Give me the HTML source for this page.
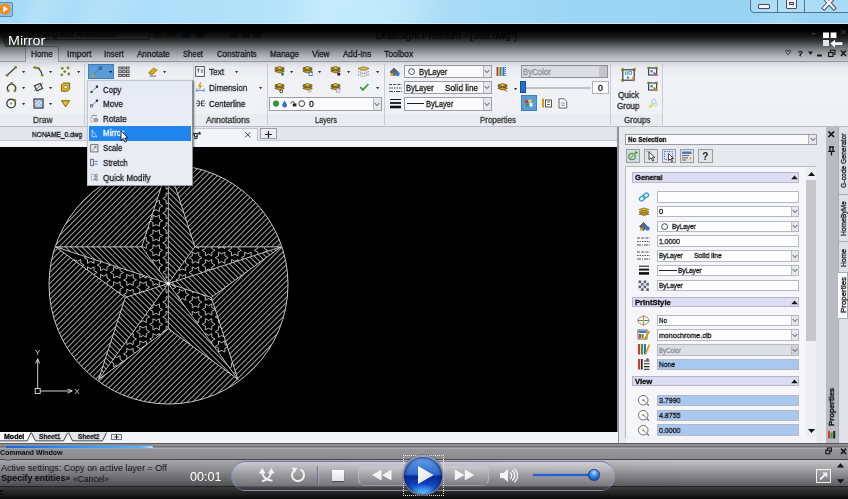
<!DOCTYPE html>
<html><head><meta charset="utf-8"><title>Mirror</title>
<style>
html,body{margin:0;padding:0;background:#000;}
#root{position:relative;width:848px;height:499px;overflow:hidden;background:#ececf1;font-family:"Liberation Sans",sans-serif;font-size:8.5px;color:#222;}
#root div,#root span,#root svg{position:absolute;box-sizing:border-box;white-space:nowrap;}
#root svg{overflow:visible;}
#app{left:0;top:0;width:848px;height:499px;filter:blur(0.4px);}
#wmp{left:0;top:0;width:848px;height:499px;}
#app span{-webkit-text-stroke:0.3px currentColor;}
#root span{will-change:transform;}
</style></head><body>
<div id="root">
<div id="app">
<div style="left:0.0px;top:0.0px;width:848.0px;height:24.0px;background:linear-gradient(90deg,#a6dbf6 0%,#b3e2f9 30%,#c2eafc 44%,#a9dcf6 52%,#9bd5f4 70%,#98d3f3 100%);"></div>
<div style="left:0.0px;top:0.0px;width:848.0px;height:24.0px;background:linear-gradient(115deg,rgba(255,255,255,0) 3%,rgba(255,255,255,.16) 5%,rgba(255,255,255,0) 9%,rgba(255,255,255,.12) 12%,rgba(255,255,255,0) 17%,rgba(255,255,255,0) 34%,rgba(255,255,255,.14) 38%,rgba(255,255,255,0) 44%,rgba(255,255,255,.1) 48%,rgba(255,255,255,0) 53%,rgba(255,255,255,0) 88%,rgba(255,255,255,.12) 92%,rgba(255,255,255,0) 96%);"></div>
<div style="left:0.0px;top:22.5px;width:848.0px;height:1.5px;background:#c9ecfb;"></div>
<div style="left:-2.0px;top:1.5px;width:15.0px;height:15.5px;background:#8fc0ea;border:1.5px solid #4f8fd0;border-radius:2px;"></div>
<svg style="left:-1px;top:3px" width="12" height="12" viewBox="0 0 12 12"><circle cx="6" cy="6" r="5.6" fill="#f68b10"/><path d="M4.2 2.8 L9.2 6 L4.2 9.2Z" fill="#fff"/></svg>
<div style="left:749.5px;top:-6.0px;width:110.0px;height:19.3px;border:1px solid #55748a;border-radius:4px;background:rgba(200,236,252,0.35);"></div>
<div style="left:777.3px;top:0.0px;width:1.0px;height:13.0px;background:#55748a;"></div>
<div style="left:804.0px;top:0.0px;width:1.0px;height:13.0px;background:#55748a;"></div>
<div style="left:758.3px;top:4.0px;width:12.0px;height:4.6px;background:#f4f4f6;border:1px solid #444a60;border-radius:1px;"></div>
<div style="left:785.6px;top:-3.0px;width:11.0px;height:11.6px;background:#f4f4f6;border:1px solid #444a60;border-radius:1px;"></div>
<div style="left:788.5px;top:1.8px;width:5.2px;height:3.2px;background:#a9d9f2;border:1px solid #444a60;"></div>
<svg style="left:822px;top:-3px" width="14" height="13" viewBox="0 0 14 13"><path d="M2.2 0.5 L11.8 11 M11.8 0.5 L2.2 11" stroke="#444a60" stroke-width="4.2" stroke-linecap="square"/><path d="M2.2 0.5 L11.8 11 M11.8 0.5 L2.2 11" stroke="#f4f4f6" stroke-width="2.4" stroke-linecap="square"/></svg>
<div style="left:0.0px;top:24.0px;width:848.0px;height:22.5px;background:#e3e6ee;"></div>
<div style="left:2.0px;top:30.0px;width:22.0px;height:18.0px;background:linear-gradient(135deg,#5a6b3a,#2b3b20);transform:skewX(20deg);opacity:.6;"></div>
<div style="left:25.0px;top:26.5px;width:125.0px;height:13.0px;background:#f2f3f7;border:1px solid #8a8e99;"></div>
<span style="left:27.5px;top:27px;height:13px;line-height:13px;font-size:10.00px;transform-origin:0 50%;transform:scaleX(0.8419);color:#333;">Drafting and Annotation</span>
<span style="left:375.7px;top:28px;height:14px;line-height:14px;font-size:10.50px;transform-origin:0 50%;transform:scaleX(0.9293);color:#333;">DraftSight Premium - [Star.dwg*]</span>
<div style="left:153.0px;top:29.0px;width:8.0px;height:9.0px;background:#888;opacity:.8;border-radius:1px;"></div>
<div style="left:167.0px;top:29.0px;width:8.0px;height:9.0px;background:#c9a227;opacity:.8;border-radius:1px;"></div>
<div style="left:182.0px;top:29.0px;width:8.0px;height:9.0px;background:#3b62b5;opacity:.8;border-radius:1px;"></div>
<div style="left:196.0px;top:29.0px;width:8.0px;height:9.0px;background:#666;opacity:.8;border-radius:1px;"></div>
<div style="left:230.0px;top:29.0px;width:8.0px;height:9.0px;background:#666;opacity:.8;border-radius:1px;"></div>
<div style="left:242.0px;top:29.0px;width:8.0px;height:9.0px;background:#666;opacity:.8;border-radius:1px;"></div>
<div style="left:253.0px;top:29.0px;width:8.0px;height:9.0px;background:#666;opacity:.8;border-radius:1px;"></div>
<div style="left:0.0px;top:46.5px;width:848.0px;height:15.0px;background:#dfe2ea;"></div>
<div style="left:0.0px;top:61.0px;width:848.0px;height:1.0px;background:#a4a7b0;"></div>
<div style="left:24.8px;top:46.4px;width:34.6px;height:15.6px;background:#eef0f6;border:1px solid #a4a7b0;border-bottom:none;border-radius:2px 2px 0 0;"></div>
<span style="left:31.3px;top:48px;height:12px;line-height:12px;font-size:8.80px;transform-origin:0 50%;transform:scaleX(0.9287);color:#1c2030;">Home</span>
<span style="left:66.6px;top:48px;height:12px;line-height:12px;font-size:8.80px;transform-origin:0 50%;transform:scaleX(0.9824);color:#1c2030;">Import</span>
<span style="left:104.1px;top:48px;height:12px;line-height:12px;font-size:8.80px;transform-origin:0 50%;transform:scaleX(0.8951);color:#1c2030;">Insert</span>
<span style="left:137.2px;top:48px;height:12px;line-height:12px;font-size:8.80px;transform-origin:0 50%;transform:scaleX(0.9310);color:#1c2030;">Annotate</span>
<span style="left:183.3px;top:48px;height:12px;line-height:12px;font-size:8.80px;transform-origin:0 50%;transform:scaleX(0.8697);color:#1c2030;">Sheet</span>
<span style="left:216.8px;top:48px;height:12px;line-height:12px;font-size:8.80px;transform-origin:0 50%;transform:scaleX(0.8920);color:#1c2030;">Constraints</span>
<span style="left:270.0px;top:48px;height:12px;line-height:12px;font-size:8.80px;transform-origin:0 50%;transform:scaleX(0.9056);color:#1c2030;">Manage</span>
<span style="left:312.0px;top:48px;height:12px;line-height:12px;font-size:8.80px;transform-origin:0 50%;transform:scaleX(0.9251);color:#1c2030;">View</span>
<span style="left:342.8px;top:48px;height:12px;line-height:12px;font-size:8.80px;transform-origin:0 50%;transform:scaleX(0.9298);color:#1c2030;">Add-Ins</span>
<span style="left:384.3px;top:48px;height:12px;line-height:12px;font-size:8.80px;transform-origin:0 50%;transform:scaleX(0.9627);color:#1c2030;">Toolbox</span>
<span style="left:595.0px;top:48px;height:9px;line-height:9px;font-size:7.00px;color:#333;left:785px;">♡</span>
<span style="left:0.0px;top:48px;height:11px;line-height:11px;font-size:8.00px;font-weight:bold;color:#222;left:797.5px;">?</span>
<svg style="left:804px;top:49px" width="44" height="10" viewBox="0 0 44 10"><path d="M4 2.5 L9 2.5 L6.5 6Z" fill="#222"/><rect x="13" y="5.5" width="5" height="2" fill="#222"/><rect x="26.5" y="1.2" width="4.5" height="4" fill="none" stroke="#222" stroke-width="1.1"/><rect x="24.5" y="3.5" width="4.5" height="4" fill="#ddd" stroke="#222" stroke-width="1.1"/><path d="M37 1.5 L42 7 M42 1.5 L37 7" stroke="#222" stroke-width="1.6"/></svg>
<div style="left:0.0px;top:62.0px;width:848.0px;height:64.5px;background:linear-gradient(180deg,#e9eaf0 0%,#f1f2f6 30%,#f0f1f5 100%);"></div>
<div style="left:0.0px;top:126.0px;width:848.0px;height:1.0px;background:#b9bcc6;"></div>
<div style="left:0.0px;top:113.5px;width:662.0px;height:12.5px;background:#ebecf1;"></div>
<div style="left:84.0px;top:64.0px;width:1.0px;height:61.0px;background:#c9ccd5;"></div>
<div style="left:193.0px;top:64.0px;width:1.0px;height:61.0px;background:#c9ccd5;"></div>
<div style="left:266.5px;top:64.0px;width:1.0px;height:61.0px;background:#c9ccd5;"></div>
<div style="left:384.0px;top:64.0px;width:1.0px;height:61.0px;background:#c9ccd5;"></div>
<div style="left:609.5px;top:64.0px;width:1.0px;height:61.0px;background:#c9ccd5;"></div>
<div style="left:661.5px;top:64.0px;width:1.0px;height:61.0px;background:#c9ccd5;"></div>
<svg style="left:5.4px;top:65.3px" width="13.1" height="12.3" viewBox="0 0 16 15"><path d="M2.5 12.5 L13 3" stroke="#3f3f3f" stroke-width="1.5"/><circle cx="2.5" cy="12.5" r="1.7" fill="#7d8a22"/><circle cx="13" cy="3" r="1.7" fill="#7d8a22"/></svg>
<svg style="left:32.4px;top:65.3px" width="13.1" height="12.3" viewBox="0 0 16 15"><path d="M3 3 L8 4 L11 8 L12.5 12.5" stroke="#3f3f3f" stroke-width="1.5" fill="none"/><circle cx="3" cy="3" r="1.6" fill="#7d8a22"/><circle cx="8" cy="4" r="1.6" fill="#7d8a22"/><circle cx="12.5" cy="12.5" r="1.6" fill="#7d8a22"/></svg>
<svg style="left:59.4px;top:65.3px" width="13.1" height="12.3" viewBox="0 0 16 15"><circle cx="4" cy="4" r="1.7" fill="#7d8a22"/><circle cx="11" cy="3.5" r="1.7" fill="#7d8a22"/><circle cx="7" cy="8" r="1.7" fill="#7d8a22"/><circle cx="3.5" cy="12" r="1.7" fill="#7d8a22"/><circle cx="12" cy="11" r="1.7" fill="#7d8a22"/></svg>
<svg style="left:5.4px;top:81.3px" width="13.1" height="12.3" viewBox="0 0 16 15"><path d="M4 12 A5 5 0 1 1 12 12" stroke="#3f3f3f" stroke-width="1.6" fill="none"/><circle cx="4" cy="12" r="1.7" fill="#7d8a22"/><circle cx="12" cy="12" r="1.7" fill="#7d8a22"/><circle cx="8" cy="3" r="1.7" fill="#7d8a22"/></svg>
<svg style="left:32.4px;top:81.3px" width="13.1" height="12.3" viewBox="0 0 16 15"><path d="M3 6 L10 3 L13 9 L6 12Z" stroke="#3f3f3f" stroke-width="1.5" fill="none"/><path d="M3 12 L13 3" stroke="#3f3f3f" stroke-width="1"/></svg>
<svg style="left:59.4px;top:81.3px" width="13.1" height="12.3" viewBox="0 0 16 15"><path d="M3 4.5 L5.5 2.5 L13 2.5 L13 10 L10.5 12.5 L3 12.5Z" fill="#e6bc1c" stroke="#6e6410" stroke-width="1.2"/><path d="M6 6 L10.5 5.5 L10 9.5 L6 9.5Z" fill="#f1f2f6" stroke="#6e6410" stroke-width=".8"/></svg>
<svg style="left:5.4px;top:97.3px" width="13.1" height="12.3" viewBox="0 0 16 15"><circle cx="7.5" cy="8" r="5.3" stroke="#3f3f3f" stroke-width="1.6" fill="none"/><circle cx="7.5" cy="8" r="1.2" fill="#7d8a22"/><circle cx="12" cy="4" r="1.6" fill="#7d8a22"/></svg>
<svg style="left:32.4px;top:97.3px" width="13.1" height="12.3" viewBox="0 0 16 15"><rect x="2.5" y="2.5" width="11" height="11" fill="#c4d8ee" stroke="#3a3a3a" stroke-width="1.5"/><path d="M3 8 L8 3 M3 13 L13 3 M8 13 L13 8" stroke="#6d8db3" stroke-width=".8"/></svg>
<svg style="left:59.4px;top:97.3px" width="13.1" height="12.3" viewBox="0 0 16 15"><path d="M3 4.5 L13 4.5 L8 12Z" fill="#ecc61c" stroke="#6e6410" stroke-width="1.2"/></svg>
<svg style="left:22.4px;top:70.7px" width="3.2" height="2.4" viewBox="0 0 3.2 2.4"><path d="M0 0 L3.2 0 L1.6 2.2Z" fill="#333"/></svg>
<svg style="left:49.4px;top:70.7px" width="3.2" height="2.4" viewBox="0 0 3.2 2.4"><path d="M0 0 L3.2 0 L1.6 2.2Z" fill="#333"/></svg>
<svg style="left:77.4px;top:70.7px" width="3.2" height="2.4" viewBox="0 0 3.2 2.4"><path d="M0 0 L3.2 0 L1.6 2.2Z" fill="#333"/></svg>
<svg style="left:22.4px;top:86.9px" width="3.2" height="2.4" viewBox="0 0 3.2 2.4"><path d="M0 0 L3.2 0 L1.6 2.2Z" fill="#333"/></svg>
<svg style="left:49.4px;top:86.9px" width="3.2" height="2.4" viewBox="0 0 3.2 2.4"><path d="M0 0 L3.2 0 L1.6 2.2Z" fill="#333"/></svg>
<svg style="left:22.4px;top:102.7px" width="3.2" height="2.4" viewBox="0 0 3.2 2.4"><path d="M0 0 L3.2 0 L1.6 2.2Z" fill="#333"/></svg>
<svg style="left:49.4px;top:102.7px" width="3.2" height="2.4" viewBox="0 0 3.2 2.4"><path d="M0 0 L3.2 0 L1.6 2.2Z" fill="#333"/></svg>
<span style="left:32.5px;top:114px;height:12px;line-height:12px;font-size:9.00px;transform-origin:0 50%;transform:scaleX(0.9285);color:#333;">Draw</span>
<div style="left:88.0px;top:64.2px;width:26.0px;height:15.0px;background:#5b9bd8;border:1px solid #3f7fc4;"></div>
<svg style="left:90.0px;top:65.0px" width="14" height="13" viewBox="0 0 14 13"><path d="M3 10.5 L10.5 3" stroke="#1d4f8f" stroke-width="1" stroke-dasharray="1.6 1.2"/><circle cx="3" cy="10.5" r="1.6" fill="#c9a227"/><circle cx="10.5" cy="3" r="1.6" fill="#3d74b8" stroke="#1d4f8f" stroke-width=".6"/></svg>
<svg style="left:108.9px;top:71.2px" width="3.2" height="2.4" viewBox="0 0 3.2 2.4"><path d="M0 0 L3.2 0 L1.6 2.2Z" fill="#123"/></svg>
<svg style="left:118.0px;top:65.5px" width="12" height="12" viewBox="0 0 12 12"><rect x="0.7" y="1" width="2.6" height="2" fill="none" stroke="#444" stroke-width=".9"/><rect x="0.7" y="4.7" width="2.6" height="2" fill="none" stroke="#444" stroke-width=".9"/><rect x="0.7" y="8.4" width="2.6" height="2" fill="none" stroke="#444" stroke-width=".9"/><rect x="4.6" y="1" width="2.6" height="2" fill="none" stroke="#444" stroke-width=".9"/><rect x="4.6" y="4.7" width="2.6" height="2" fill="none" stroke="#444" stroke-width=".9"/><rect x="4.6" y="8.4" width="2.6" height="2" fill="none" stroke="#444" stroke-width=".9"/><rect x="8.5" y="1" width="2.6" height="2" fill="none" stroke="#444" stroke-width=".9"/><rect x="8.5" y="4.7" width="2.6" height="2" fill="none" stroke="#444" stroke-width=".9"/><rect x="8.5" y="8.4" width="2.6" height="2" fill="none" stroke="#444" stroke-width=".9"/></svg>
<svg style="left:146.6px;top:66.2px" width="11.5" height="10.7" viewBox="0 0 14 13"><path d="M2 8 L8 2.5 L12.5 5 L6.5 10.5Z" fill="#d9a818" stroke="#8a6c0c" stroke-width=".8"/><path d="M2 8 L6.5 10.5 L6.5 12 L2 9.5Z" fill="#b58a10"/><path d="M3 12.3 L11 12.3" stroke="#555" stroke-width="1"/></svg>
<svg style="left:163.4px;top:71.2px" width="3.2" height="2.4" viewBox="0 0 3.2 2.4"><path d="M0 0 L3.2 0 L1.6 2.2Z" fill="#333"/></svg>
<span style="left:126.0px;top:114px;height:12px;line-height:12px;font-size:9.00px;transform-origin:0 50%;transform:scaleX(0.9054);color:#333;">Modify</span>
<svg style="left:195.0px;top:66.0px" width="10" height="11" viewBox="0 0 10 11"><rect x=".6" y=".6" width="8.8" height="9.8" fill="#fafafa" stroke="#555" stroke-width="1"/><path d="M2.2 3.2 L4.6 3.2 M3.4 3.2 L3.4 6.5 M5.8 4 L8 4 M5.8 6 L8 6" stroke="#444" stroke-width=".9"/></svg>
<span style="left:209.2px;top:66px;height:12px;line-height:12px;font-size:9.00px;transform-origin:0 50%;transform:scaleX(0.9088);color:#222;">Text</span>
<svg style="left:235.4px;top:71.2px" width="3.2" height="2.4" viewBox="0 0 3.2 2.4"><path d="M0 0 L3.2 0 L1.6 2.2Z" fill="#333"/></svg>
<svg style="left:195.6px;top:82.0px" width="8.8" height="10.4" viewBox="0 0 11 13"><path d="M6 .5 L3.8 5 L6.2 5 L4.4 8.6" stroke="#d89a10" stroke-width="1.6" fill="none"/><path d="M1 8 L1 12.5 M10 8 L10 12.5 M1 10.5 L10 10.5" stroke="#3a78c8" stroke-width="1"/></svg>
<span style="left:209.2px;top:82px;height:12px;line-height:12px;font-size:9.00px;transform-origin:0 50%;transform:scaleX(0.9008);color:#222;">Dimension</span>
<svg style="left:258.9px;top:87.4px" width="3.2" height="2.4" viewBox="0 0 3.2 2.4"><path d="M0 0 L3.2 0 L1.6 2.2Z" fill="#333"/></svg>
<svg style="left:195.6px;top:98.8px" width="9.6" height="8.8" viewBox="0 0 12 11"><path d="M1 2.5 L4 2.5 L4 8.5 L1 8.5 M11 2.5 L7 2.5 L7 8.5 L11 8.5" stroke="#333" stroke-width="1.2" fill="none"/><path d="M0 5.5 L12 5.5" stroke="#333" stroke-width=".9" stroke-dasharray="2.4 1.2"/></svg>
<span style="left:209.2px;top:98px;height:12px;line-height:12px;font-size:9.00px;transform-origin:0 50%;transform:scaleX(0.8848);color:#222;">Centerline</span>
<span style="left:206.2px;top:114px;height:12px;line-height:12px;font-size:9.00px;transform-origin:0 50%;transform:scaleX(0.9214);color:#333;">Annotations</span>
<svg style="left:273.5px;top:65.4px" width="12" height="11.2" viewBox="0 0 14 13"><path d="M1 5.5 L6.5 3.8 L12 5.5 L6.5 7.2Z" fill="#e0b020" stroke="#4a3c08" stroke-width=".85"/><path d="M1 3.5 L6.5 1.8 L12 3.5 L6.5 5.2Z" fill="#f0c838" stroke="#4a3c08" stroke-width=".85"/><path d="M1 7.5 L6.5 5.8 L12 7.5 L6.5 9.2Z" fill="#d09a10" stroke="#4a3c08" stroke-width=".85" opacity=".9"/><circle cx="10" cy="10.5" r="1.9" fill="#2a9a38"/></svg>
<svg style="left:302.0px;top:65.4px" width="12" height="11.2" viewBox="0 0 14 13"><path d="M1 5.5 L6.5 3.8 L12 5.5 L6.5 7.2Z" fill="#e0b020" stroke="#4a3c08" stroke-width=".85"/><path d="M1 3.5 L6.5 1.8 L12 3.5 L6.5 5.2Z" fill="#f0c838" stroke="#4a3c08" stroke-width=".85"/><path d="M1 7.5 L6.5 5.8 L12 7.5 L6.5 9.2Z" fill="#d09a10" stroke="#4a3c08" stroke-width=".85" opacity=".9"/><rect x="8.3" y="8.6" width="3.6" height="3.6" fill="#fff" stroke="#2a7ad0" stroke-width="1"/></svg>
<svg style="left:329.7px;top:65.4px" width="12" height="11.2" viewBox="0 0 14 13"><path d="M1 5.5 L6.5 3.8 L12 5.5 L6.5 7.2Z" fill="#e0b020" stroke="#4a3c08" stroke-width=".85"/><path d="M1 3.5 L6.5 1.8 L12 3.5 L6.5 5.2Z" fill="#f0c838" stroke="#4a3c08" stroke-width=".85"/><path d="M1 7.5 L6.5 5.8 L12 7.5 L6.5 9.2Z" fill="#d09a10" stroke="#4a3c08" stroke-width=".85" opacity=".9"/><rect x="8.5" y="9" width="3.4" height="3.2" fill="#222"/></svg>
<svg style="left:357.0px;top:65.0px" width="14" height="13" viewBox="0 0 14 13"><path d="M1 3.5 L6.5 1.8 L12 3.5 L6.5 5.2Z" fill="#f0c838" stroke="#6e5a10" stroke-width=".7"/><path d="M1 6.8 L6.5 5.1 L12 6.8 L6.5 8.5Z" fill="none" stroke="#888" stroke-width=".8" stroke-dasharray="1.2 .8"/><path d="M1 9.8 L6.5 8.1 L12 9.8 L6.5 11.5Z" fill="none" stroke="#888" stroke-width=".8" stroke-dasharray="1.2 .8"/></svg>
<svg style="left:290.4px;top:71.2px" width="3.2" height="2.4" viewBox="0 0 3.2 2.4"><path d="M0 0 L3.2 0 L1.6 2.2Z" fill="#333"/></svg>
<svg style="left:318.4px;top:71.2px" width="3.2" height="2.4" viewBox="0 0 3.2 2.4"><path d="M0 0 L3.2 0 L1.6 2.2Z" fill="#333"/></svg>
<svg style="left:347.1px;top:71.2px" width="3.2" height="2.4" viewBox="0 0 3.2 2.4"><path d="M0 0 L3.2 0 L1.6 2.2Z" fill="#333"/></svg>
<svg style="left:375.9px;top:71.2px" width="3.2" height="2.4" viewBox="0 0 3.2 2.4"><path d="M0 0 L3.2 0 L1.6 2.2Z" fill="#333"/></svg>
<svg style="left:273.5px;top:81.6px" width="12" height="11.2" viewBox="0 0 14 13"><path d="M1 5.5 L6.5 3.8 L12 5.5 L6.5 7.2Z" fill="#e0b020" stroke="#4a3c08" stroke-width=".85"/><path d="M1 3.5 L6.5 1.8 L12 3.5 L6.5 5.2Z" fill="#f0c838" stroke="#4a3c08" stroke-width=".85"/><path d="M1 7.5 L6.5 5.8 L12 7.5 L6.5 9.2Z" fill="#d09a10" stroke="#4a3c08" stroke-width=".85" opacity=".9"/><circle cx="8.5" cy="10.8" r="1.7" fill="#fff" stroke="#222" stroke-width="1.1"/></svg>
<svg style="left:302.0px;top:81.6px" width="12" height="11.2" viewBox="0 0 14 13"><path d="M1 5.5 L6.5 3.8 L12 5.5 L6.5 7.2Z" fill="#e0b020" stroke="#4a3c08" stroke-width=".85"/><path d="M1 3.5 L6.5 1.8 L12 3.5 L6.5 5.2Z" fill="#f0c838" stroke="#4a3c08" stroke-width=".85"/><path d="M1 7.5 L6.5 5.8 L12 7.5 L6.5 9.2Z" fill="#d09a10" stroke="#4a3c08" stroke-width=".85" opacity=".9"/><circle cx="9" cy="10.3" r="1.6" fill="none" stroke="#888" stroke-width=".8"/></svg>
<svg style="left:329.7px;top:81.6px" width="12" height="11.2" viewBox="0 0 14 13"><path d="M1 5.5 L6.5 3.8 L12 5.5 L6.5 7.2Z" fill="#e0b020" stroke="#4a3c08" stroke-width=".85"/><path d="M1 3.5 L6.5 1.8 L12 3.5 L6.5 5.2Z" fill="#f0c838" stroke="#4a3c08" stroke-width=".85"/><path d="M1 7.5 L6.5 5.8 L12 7.5 L6.5 9.2Z" fill="#d09a10" stroke="#4a3c08" stroke-width=".85" opacity=".9"/><rect x="7.6" y="7.6" width="4" height="4.8" fill="#ddd" stroke="#999" stroke-width=".6"/></svg>
<svg style="left:359.0px;top:83.2px" width="10.6" height="8.2" viewBox="0 0 13 10"><path d="M1.5 5 L4.8 8.4 L11.5 1.2" stroke="#35a035" stroke-width="2.2" fill="none"/></svg>
<svg style="left:375.9px;top:87.4px" width="3.2" height="2.4" viewBox="0 0 3.2 2.4"><path d="M0 0 L3.2 0 L1.6 2.2Z" fill="#333"/></svg>
<div style="left:269.0px;top:97.0px;width:112.5px;height:13.5px;background:#fbfbfd;border:1px solid #9a9da8;"></div>
<div style="left:372.5px;top:98.0px;width:8.0px;height:11.5px;background:#e6e7ee;border-left:1px solid #b0b3bd;"></div>
<svg style="left:374.0px;top:101.5px" width="6" height="5" viewBox="0 0 6 5"><path d="M.7 1 L3 3.6 L5.3 1" stroke="#555" stroke-width="1" fill="none"/></svg>
<svg style="left:272.0px;top:98.0px" width="34" height="11" viewBox="0 0 34 11"><circle cx="4" cy="5.6" r="2.8" fill="#2f9a3d" stroke="#1e6a28" stroke-width=".5"/><path d="M12.5 2.5 C14.5 5.5 15 6.3 15 7.2 A2.3 2.3 0 0 1 10.2 7.2 C10.2 6.3 11 5.2 12.5 2.5Z" fill="#2f72c8"/><path d="M19 5.5 A1.7 1.7 0 0 1 22.4 5" stroke="#333" stroke-width=".9" fill="none"/><rect x="20.8" y="5.4" width="3.6" height="3" fill="#222"/><circle cx="29.8" cy="5.6" r="2.9" fill="#fff" stroke="#222" stroke-width=".9"/></svg>
<span style="left:308.5px;top:98px;height:12px;line-height:12px;font-size:8.80px;color:#111;">0</span>
<span style="left:315.0px;top:114px;height:12px;line-height:12px;font-size:9.00px;transform-origin:0 50%;transform:scaleX(0.8144);color:#333;">Layers</span>
<svg style="left:388.0px;top:66.0px" width="13" height="11" viewBox="0 0 13 11"><path d="M2 6 L6 2 L10 6 L6 10Z" fill="#5a6a7a" stroke="#333" stroke-width=".6"/><circle cx="9.5" cy="8" r="2.2" fill="#3a78c8"/><circle cx="4" cy="8.5" r="1.6" fill="#c9a227"/></svg>
<div style="left:404.0px;top:64.5px;width:87.5px;height:13.5px;background:#fbfbfd;border:1px solid #9a9da8;"></div><div style="left:482.5px;top:65.5px;width:8.0px;height:11.5px;background:#e6e7ee;border-left:1px solid #b0b3bd;"></div><svg style="left:483.7px;top:69.0px" width="6" height="5" viewBox="0 0 6 5"><path d="M.7 1 L3 3.6 L5.3 1" stroke="#555" stroke-width="1" fill="none"/></svg>
<svg style="left:407.5px;top:68.3px" width="8" height="8" viewBox="0 0 8 8"><circle cx="3.6" cy="3.6" r="2.9" fill="#fff" stroke="#333" stroke-width=".9"/></svg>
<span style="left:418.7px;top:66px;height:12px;line-height:12px;font-size:9.30px;transform-origin:0 50%;transform:scaleX(0.8295);color:#111;">ByLayer</span>
<svg style="left:389.0px;top:83.0px" width="14" height="10" viewBox="0 0 14 10"><path d="M0 1.5 L13 1.5" stroke="#444" stroke-width="1" stroke-dasharray="3 1.2"/><path d="M0 5 L13 5" stroke="#444" stroke-width="1" stroke-dasharray="1.5 1"/><path d="M0 8.5 L13 8.5" stroke="#444" stroke-width="1" stroke-dasharray="4 1 1 1"/></svg>
<div style="left:404.0px;top:80.5px;width:87.5px;height:13.5px;background:#fbfbfd;border:1px solid #9a9da8;"></div><div style="left:482.5px;top:81.5px;width:8.0px;height:11.5px;background:#e6e7ee;border-left:1px solid #b0b3bd;"></div><svg style="left:483.7px;top:85.0px" width="6" height="5" viewBox="0 0 6 5"><path d="M.7 1 L3 3.6 L5.3 1" stroke="#555" stroke-width="1" fill="none"/></svg>
<span style="left:406.0px;top:82px;height:12px;line-height:12px;font-size:9.30px;transform-origin:0 50%;transform:scaleX(0.8119);color:#111;">ByLayer</span>
<span style="left:445.0px;top:82px;height:12px;line-height:12px;font-size:9.30px;transform-origin:0 50%;transform:scaleX(0.8744);color:#111;">Solid line</span>
<svg style="left:389.0px;top:98.0px" width="14" height="11" viewBox="0 0 14 11"><path d="M1 1.5 L12 1.5" stroke="#111" stroke-width="1"/><path d="M1 5 L12 5" stroke="#111" stroke-width="1.8"/><path d="M1 9 L12 9" stroke="#111" stroke-width="2.6"/></svg>
<div style="left:404.0px;top:97.0px;width:87.5px;height:13.5px;background:#fbfbfd;border:1px solid #9a9da8;"></div><div style="left:482.5px;top:98.0px;width:8.0px;height:11.5px;background:#e6e7ee;border-left:1px solid #b0b3bd;"></div><svg style="left:483.7px;top:101.5px" width="6" height="5" viewBox="0 0 6 5"><path d="M.7 1 L3 3.6 L5.3 1" stroke="#555" stroke-width="1" fill="none"/></svg>
<div style="left:406.7px;top:103.2px;width:17.0px;height:1.0px;background:#222;"></div>
<span style="left:425.7px;top:98px;height:12px;line-height:12px;font-size:9.30px;transform-origin:0 50%;transform:scaleX(0.8002);color:#111;">ByLayer</span>
<svg style="left:496.0px;top:66.0px" width="11" height="11" viewBox="0 0 11 11"><rect x="0.5" y="1" width="2" height="9" fill="#d03a2a"/><rect x="3.5" y="1" width="2" height="9" fill="#3a9a3a"/><rect x="6.5" y="1" width="2" height="9" fill="#3a6ad0"/><path d="M9.5 1 L9.5 10" stroke="#3a78c8" stroke-width="1" stroke-dasharray="1 1"/></svg>
<div style="left:520.5px;top:64.5px;width:87.0px;height:13.5px;background:#dcdde3;border:1px solid #8e919b;"></div>
<div style="left:599.0px;top:65.5px;width:7.5px;height:11.5px;background:#c4c5cc;"></div>
<span style="left:522.5px;top:66px;height:12px;line-height:12px;font-size:9.30px;transform-origin:0 50%;transform:scaleX(0.8465);color:#8a8d96;">ByColor</span>
<svg style="left:496.5px;top:81.6px" width="12" height="11.2" viewBox="0 0 14 13"><path d="M1 5.5 L6.5 3.8 L12 5.5 L6.5 7.2Z" fill="#e0b020" stroke="#4a3c08" stroke-width=".85"/><path d="M1 3.5 L6.5 1.8 L12 3.5 L6.5 5.2Z" fill="#f0c838" stroke="#4a3c08" stroke-width=".85"/><path d="M1 7.5 L6.5 5.8 L12 7.5 L6.5 9.2Z" fill="#d09a10" stroke="#4a3c08" stroke-width=".85" opacity=".9"/><path d="M8 9 L12 11" stroke="#c33" stroke-width="1"/></svg>
<svg style="left:514.1px;top:88.4px" width="3.2" height="2.4" viewBox="0 0 3.2 2.4"><path d="M0 0 L3.2 0 L1.6 2.2Z" fill="#333"/></svg>
<div style="left:526.0px;top:86.8px;width:65.0px;height:2.4px;background:#dcdde3;border:1px solid #c0c2ca;"></div>
<div style="left:520.0px;top:81.0px;width:6.0px;height:12.0px;background:#1f6fd0;border:1px solid #16509a;"></div>
<div style="left:592.0px;top:81.3px;width:16.5px;height:13.2px;background:#fbfbfd;border:1px solid #b0b3bd;"></div>
<span style="left:597.7px;top:82px;height:12px;line-height:12px;font-size:8.80px;color:#111;">0</span>
<div style="left:520.7px;top:95.0px;width:16.5px;height:16.0px;background:#5b9bd8;border:1px solid #3f7fc4;"></div>
<svg style="left:524.0px;top:98.5px" width="10" height="9" viewBox="0 0 10 9"><rect x="1" y="1" width="3" height="3" fill="#d03a2a"/><rect x="4.5" y="0.5" width="3" height="3" fill="#e8d040"/><rect x="2" y="4.5" width="3" height="3" fill="#3a9a3a"/><rect x="5.5" y="4" width="3" height="3.5" fill="#f4f4f4"/></svg>
<svg style="left:540.5px;top:97.5px" width="12" height="11" viewBox="0 0 12 11"><rect x="1" y="0.5" width="2" height="9" fill="#d89a10"/><rect x="4.5" y="2" width="6" height="7" fill="#fff" stroke="#444" stroke-width=".9"/><path d="M6 4 L9 4 M6 6.5 L9 6.5" stroke="#444" stroke-width=".8"/></svg>
<svg style="left:558.0px;top:97.5px" width="10" height="11" viewBox="0 0 10 11"><path d="M1 .8 L6 .8 L8.8 3.5 L8.8 10 L1 10Z" fill="#fff" stroke="#555" stroke-width=".9"/><path d="M2.8 5 L7 5 M2.8 7.2 L7 7.2" stroke="#4a7ab8" stroke-width=".8"/></svg>
<span style="left:480.0px;top:114px;height:12px;line-height:12px;font-size:9.00px;transform-origin:0 50%;transform:scaleX(0.8776);color:#333;">Properties</span>
<svg style="left:620.5px;top:67.5px" width="15" height="15" viewBox="0 0 15 15"><rect x="1.8" y="1.8" width="11.4" height="10.4" fill="#f4f8fc" stroke="#3a3a3a" stroke-width="1.2"/><rect x=".3" y=".3" width="2.6" height="2.6" fill="#7a7420"/><rect x="12" y=".3" width="2.6" height="2.6" fill="#7a7420"/><rect x=".3" y="11" width="2.6" height="2.6" fill="#7a7420"/><rect x="4.2" y="4" width="2.6" height="2.2" fill="none" stroke="#3aa080" stroke-width=".8"/><rect x="8" y="3.6" width="2.6" height="2.6" fill="none" stroke="#3a90c8" stroke-width=".8"/><path d="M5.5 10.5 L7 7.5 L8.5 10.5Z" fill="#3a78c8"/><path d="M10.5 9 L13.8 9 L12 13.5Z" fill="#d8a020"/></svg>
<span style="left:618.0px;top:89px;height:12px;line-height:12px;font-size:9.00px;transform-origin:0 50%;transform:scaleX(0.9128);color:#222;">Quick</span>
<span style="left:617.0px;top:100px;height:12px;line-height:12px;font-size:9.00px;transform-origin:0 50%;transform:scaleX(0.8955);color:#222;">Group</span>
<svg style="left:646.5px;top:65.5px" width="11" height="11" viewBox="0 0 11 11"><rect x="1.6" y="2" width="8" height="7" fill="#eef4fa" stroke="#3a3a3a" stroke-width="1.1"/><rect x=".4" y=".8" width="2.2" height="2.2" fill="#7a7420"/><rect x="8.4" y=".8" width="2.2" height="2.2" fill="#7a7420"/><rect x="3.4" y="4" width="2.4" height="2.4" fill="#3a90c8"/><path d="M6.5 6.5 L10.5 9.5" stroke="#c050a0" stroke-width="1.6"/></svg>
<svg style="left:646.5px;top:81.2px" width="11" height="11" viewBox="0 0 11 11"><rect x="1.6" y="2" width="8" height="7" fill="#eef4fa" stroke="#3a3a3a" stroke-width="1.1"/><rect x=".4" y=".8" width="2.2" height="2.2" fill="#7a7420"/><rect x="8.4" y=".8" width="2.2" height="2.2" fill="#7a7420"/><rect x="3.4" y="4" width="2.4" height="2.4" fill="#3a90c8"/><path d="M6.5 6.5 L10.5 9.5" stroke="#c88a20" stroke-width="1.6"/></svg>
<svg style="left:646.5px;top:98.0px" width="11" height="11" viewBox="0 0 11 11"><circle cx="6.8" cy="3.6" r="2.2" fill="none" stroke="#9cc8e8" stroke-width=".9"/><circle cx="8.6" cy="6.2" r="1.6" fill="none" stroke="#b0d4ee" stroke-width=".8"/><path d="M1.5 8.5 L5.5 5.5 L6.5 7.5 L2.5 10Z" fill="#ecd040"/></svg>
<span style="left:623.6px;top:114px;height:12px;line-height:12px;font-size:9.00px;transform-origin:0 50%;transform:scaleX(0.8945);color:#333;">Groups</span>
<div style="left:0.0px;top:127.0px;width:618.0px;height:13.5px;background:#e3e4ec;"></div>
<div style="left:0.0px;top:140.5px;width:618.0px;height:6.5px;background:#f3f4f8;"></div>
<div style="left:0.0px;top:140.0px;width:618.0px;height:1.0px;background:#c5c7d0;"></div>
<div style="left:88.0px;top:127.5px;width:170.0px;height:13.5px;background:#f3f4f8;border:1px solid #c5c7d0;border-bottom:none;"></div>
<span style="left:31.8px;top:129px;height:11px;line-height:11px;font-size:7.60px;transform-origin:0 50%;transform:scaleX(0.8675);color:#111;">NONAME_0.dwg</span>
<span style="left:168.0px;top:129px;height:11px;line-height:11px;font-size:7.60px;transform-origin:0 50%;transform:scaleX(1.0144);color:#111;">Star.dwg*</span>
<svg style="left:244.0px;top:131.0px" width="8" height="8" viewBox="0 0 8 8"><path d="M1.2 1.2 L6.4 6.4 M6.4 1.2 L1.2 6.4" stroke="#444" stroke-width="1"/></svg>
<div style="left:260.0px;top:127.8px;width:16.5px;height:11.6px;background:#ececf2;border:1px solid #9a9da8;"></div>
<svg style="left:263.5px;top:129.5px" width="9" height="9" viewBox="0 0 9 9"><path d="M4.5 1 L4.5 8 M1 4.5 L8 4.5" stroke="#222" stroke-width="1.2"/></svg>
<div style="left:0.0px;top:147.0px;width:617.0px;height:285.4px;background:#000;"></div>
<svg style="left:0;top:147px;overflow:hidden;filter:blur(0.25px)" width="617" height="285" viewBox="0 0 617 285"><defs><clipPath id="cC"><circle cx="168.50" cy="137.50" r="119.50"/></clipPath><clipPath id="cO"><path clip-rule="evenodd" d="M 168.50 137.50 m -119.50 0 a 119.50 119.50 0 1 0 239.00 0 a 119.50 119.50 0 1 0 -239.00 0 Z M 168.30 18.00 L 141.70 99.88 L 55.60 99.88 L 125.25 150.49 L 98.65 232.37 L 168.30 181.76 L 237.95 232.37 L 211.35 150.49 L 281.00 99.88 L 194.90 99.88 Z"/></clipPath><clipPath id="cL0"><polygon points="168.30,136.50 168.30,18.00 194.90,99.88"/></clipPath><clipPath id="cL1"><polygon points="168.30,136.50 55.60,99.88 141.70,99.88"/></clipPath><clipPath id="cL2"><polygon points="168.30,136.50 98.65,232.37 125.25,150.49"/></clipPath><clipPath id="cL3"><polygon points="168.30,136.50 237.95,232.37 168.30,181.76"/></clipPath><clipPath id="cL4"><polygon points="168.30,136.50 281.00,99.88 211.35,150.49"/></clipPath><clipPath id="cSall"><polygon points="168.30,136.50 168.30,18.00 141.70,99.88"/><polygon points="168.30,136.50 55.60,99.88 125.25,150.49"/><polygon points="168.30,136.50 98.65,232.37 168.30,181.76"/><polygon points="168.30,136.50 237.95,232.37 211.35,150.49"/><polygon points="168.30,136.50 281.00,99.88 194.90,99.88"/></clipPath></defs><g clip-path="url(#cO)" stroke="#9a9a9a" stroke-width="1.05"><path d="M-5.9 137.7L168.7 -36.9M-3.2 140.4L171.4 -34.2M-0.5 143.2L174.2 -31.5M2.2 145.9L176.9 -28.8M4.9 148.6L179.6 -26.1M7.7 151.3L182.3 -23.3M10.4 154.0L185.0 -20.6M13.1 156.8L187.8 -17.9M15.8 159.5L190.5 -15.2M18.6 162.2L193.2 -12.4M21.3 164.9L195.9 -9.7M24.0 167.7L198.7 -7.0M26.7 170.4L201.4 -4.3M29.4 173.1L204.1 -1.6M32.2 175.8L206.8 1.2M34.9 178.5L209.5 3.9M37.6 181.3L212.3 6.6M40.3 184.0L215.0 9.3M43.1 186.7L217.7 12.1M45.8 189.4L220.4 14.8M48.5 192.2L223.2 17.5M51.2 194.9L225.9 20.2M53.9 197.6L228.6 22.9M56.7 200.3L231.3 25.7M59.4 203.0L234.0 28.4M62.1 205.8L236.8 31.1M64.8 208.5L239.5 33.8M67.6 211.2L242.2 36.6M70.3 213.9L244.9 39.3M73.0 216.7L247.7 42.0M75.7 219.4L250.4 44.7M78.4 222.1L253.1 47.4M81.2 224.8L255.8 50.2M83.9 227.6L258.6 52.9M86.6 230.3L261.3 55.6M89.3 233.0L264.0 58.3M92.1 235.7L266.7 61.1M94.8 238.4L269.4 63.8M97.5 241.2L272.2 66.5M100.2 243.9L274.9 69.2M103.0 246.6L277.6 72.0M105.7 249.3L280.3 74.7M108.4 252.1L283.1 77.4M111.1 254.8L285.8 80.1M113.8 257.5L288.5 82.8M116.6 260.2L291.2 85.6M119.3 262.9L293.9 88.3M122.0 265.7L296.7 91.0M124.7 268.4L299.4 93.7M127.5 271.1L302.1 96.5M130.2 273.8L304.8 99.2M132.9 276.6L307.6 101.9M135.6 279.3L310.3 104.6M138.3 282.0L313.0 107.3M141.1 284.7L315.7 110.1M143.8 287.4L318.4 112.8M146.5 290.2L321.2 115.5M149.2 292.9L323.9 118.2M152.0 295.6L326.6 121.0M154.7 298.3L329.3 123.7M157.4 301.1L332.1 126.4M160.1 303.8L334.8 129.1M162.8 306.5L337.5 131.8M165.6 309.2L340.2 134.6M168.3 311.9L342.9 137.3"/></g><g clip-path="url(#cL0)" stroke="#9a9a9a" stroke-width="1.05"><path d="M168.7 311.9L-5.9 137.3M171.4 309.2L-3.2 134.6M174.2 306.5L-0.5 131.8M176.9 303.8L2.2 129.1M179.6 301.1L4.9 126.4M182.3 298.3L7.7 123.7M185.0 295.6L10.4 121.0M187.8 292.9L13.1 118.2M190.5 290.2L15.8 115.5M193.2 287.4L18.6 112.8M195.9 284.7L21.3 110.1M198.7 282.0L24.0 107.3M201.4 279.3L26.7 104.6M204.1 276.6L29.4 101.9M206.8 273.8L32.2 99.2M209.5 271.1L34.9 96.5M212.3 268.4L37.6 93.7M215.0 265.7L40.3 91.0M217.7 262.9L43.1 88.3M220.4 260.2L45.8 85.6M223.2 257.5L48.5 82.8M225.9 254.8L51.2 80.1M228.6 252.1L53.9 77.4M231.3 249.3L56.7 74.7M234.0 246.6L59.4 72.0M236.8 243.9L62.1 69.2M239.5 241.2L64.8 66.5M242.2 238.4L67.6 63.8M244.9 235.7L70.3 61.1M247.7 233.0L73.0 58.3M250.4 230.3L75.7 55.6M253.1 227.6L78.4 52.9M255.8 224.8L81.2 50.2M258.6 222.1L83.9 47.4M261.3 219.4L86.6 44.7M264.0 216.7L89.3 42.0M266.7 213.9L92.1 39.3M269.4 211.2L94.8 36.6M272.2 208.5L97.5 33.8M274.9 205.8L100.2 31.1M277.6 203.0L103.0 28.4M280.3 200.3L105.7 25.7M283.1 197.6L108.4 22.9M285.8 194.9L111.1 20.2M288.5 192.2L113.8 17.5M291.2 189.4L116.6 14.8M293.9 186.7L119.3 12.1M296.7 184.0L122.0 9.3M299.4 181.3L124.7 6.6M302.1 178.5L127.5 3.9M304.8 175.8L130.2 1.2M307.6 173.1L132.9 -1.6M310.3 170.4L135.6 -4.3M313.0 167.7L138.3 -7.0M315.7 164.9L141.1 -9.7M318.4 162.2L143.8 -12.4M321.2 159.5L146.5 -15.2M323.9 156.8L149.2 -17.9M326.6 154.0L152.0 -20.6M329.3 151.3L154.7 -23.3M332.1 148.6L157.4 -26.1M334.8 145.9L160.1 -28.8M337.5 143.2L162.8 -31.5M340.2 140.4L165.6 -34.2M342.9 137.7L168.3 -36.9"/></g><g clip-path="url(#cL1)" stroke="#9a9a9a" stroke-width="1.05"><path d="M168.7 311.9L-5.9 137.3M171.4 309.2L-3.2 134.6M174.2 306.5L-0.5 131.8M176.9 303.8L2.2 129.1M179.6 301.1L4.9 126.4M182.3 298.3L7.7 123.7M185.0 295.6L10.4 121.0M187.8 292.9L13.1 118.2M190.5 290.2L15.8 115.5M193.2 287.4L18.6 112.8M195.9 284.7L21.3 110.1M198.7 282.0L24.0 107.3M201.4 279.3L26.7 104.6M204.1 276.6L29.4 101.9M206.8 273.8L32.2 99.2M209.5 271.1L34.9 96.5M212.3 268.4L37.6 93.7M215.0 265.7L40.3 91.0M217.7 262.9L43.1 88.3M220.4 260.2L45.8 85.6M223.2 257.5L48.5 82.8M225.9 254.8L51.2 80.1M228.6 252.1L53.9 77.4M231.3 249.3L56.7 74.7M234.0 246.6L59.4 72.0M236.8 243.9L62.1 69.2M239.5 241.2L64.8 66.5M242.2 238.4L67.6 63.8M244.9 235.7L70.3 61.1M247.7 233.0L73.0 58.3M250.4 230.3L75.7 55.6M253.1 227.6L78.4 52.9M255.8 224.8L81.2 50.2M258.6 222.1L83.9 47.4M261.3 219.4L86.6 44.7M264.0 216.7L89.3 42.0M266.7 213.9L92.1 39.3M269.4 211.2L94.8 36.6M272.2 208.5L97.5 33.8M274.9 205.8L100.2 31.1M277.6 203.0L103.0 28.4M280.3 200.3L105.7 25.7M283.1 197.6L108.4 22.9M285.8 194.9L111.1 20.2M288.5 192.2L113.8 17.5M291.2 189.4L116.6 14.8M293.9 186.7L119.3 12.1M296.7 184.0L122.0 9.3M299.4 181.3L124.7 6.6M302.1 178.5L127.5 3.9M304.8 175.8L130.2 1.2M307.6 173.1L132.9 -1.6M310.3 170.4L135.6 -4.3M313.0 167.7L138.3 -7.0M315.7 164.9L141.1 -9.7M318.4 162.2L143.8 -12.4M321.2 159.5L146.5 -15.2M323.9 156.8L149.2 -17.9M326.6 154.0L152.0 -20.6M329.3 151.3L154.7 -23.3M332.1 148.6L157.4 -26.1M334.8 145.9L160.1 -28.8M337.5 143.2L162.8 -31.5M340.2 140.4L165.6 -34.2M342.9 137.7L168.3 -36.9"/></g><g clip-path="url(#cL2)" stroke="#9a9a9a" stroke-width="1.05"><path d="M168.7 311.9L-5.9 137.3M171.4 309.2L-3.2 134.6M174.2 306.5L-0.5 131.8M176.9 303.8L2.2 129.1M179.6 301.1L4.9 126.4M182.3 298.3L7.7 123.7M185.0 295.6L10.4 121.0M187.8 292.9L13.1 118.2M190.5 290.2L15.8 115.5M193.2 287.4L18.6 112.8M195.9 284.7L21.3 110.1M198.7 282.0L24.0 107.3M201.4 279.3L26.7 104.6M204.1 276.6L29.4 101.9M206.8 273.8L32.2 99.2M209.5 271.1L34.9 96.5M212.3 268.4L37.6 93.7M215.0 265.7L40.3 91.0M217.7 262.9L43.1 88.3M220.4 260.2L45.8 85.6M223.2 257.5L48.5 82.8M225.9 254.8L51.2 80.1M228.6 252.1L53.9 77.4M231.3 249.3L56.7 74.7M234.0 246.6L59.4 72.0M236.8 243.9L62.1 69.2M239.5 241.2L64.8 66.5M242.2 238.4L67.6 63.8M244.9 235.7L70.3 61.1M247.7 233.0L73.0 58.3M250.4 230.3L75.7 55.6M253.1 227.6L78.4 52.9M255.8 224.8L81.2 50.2M258.6 222.1L83.9 47.4M261.3 219.4L86.6 44.7M264.0 216.7L89.3 42.0M266.7 213.9L92.1 39.3M269.4 211.2L94.8 36.6M272.2 208.5L97.5 33.8M274.9 205.8L100.2 31.1M277.6 203.0L103.0 28.4M280.3 200.3L105.7 25.7M283.1 197.6L108.4 22.9M285.8 194.9L111.1 20.2M288.5 192.2L113.8 17.5M291.2 189.4L116.6 14.8M293.9 186.7L119.3 12.1M296.7 184.0L122.0 9.3M299.4 181.3L124.7 6.6M302.1 178.5L127.5 3.9M304.8 175.8L130.2 1.2M307.6 173.1L132.9 -1.6M310.3 170.4L135.6 -4.3M313.0 167.7L138.3 -7.0M315.7 164.9L141.1 -9.7M318.4 162.2L143.8 -12.4M321.2 159.5L146.5 -15.2M323.9 156.8L149.2 -17.9M326.6 154.0L152.0 -20.6M329.3 151.3L154.7 -23.3M332.1 148.6L157.4 -26.1M334.8 145.9L160.1 -28.8M337.5 143.2L162.8 -31.5M340.2 140.4L165.6 -34.2M342.9 137.7L168.3 -36.9"/></g><g clip-path="url(#cL3)" stroke="#9a9a9a" stroke-width="1.05"><path d="M168.7 311.9L-5.9 137.3M171.4 309.2L-3.2 134.6M174.2 306.5L-0.5 131.8M176.9 303.8L2.2 129.1M179.6 301.1L4.9 126.4M182.3 298.3L7.7 123.7M185.0 295.6L10.4 121.0M187.8 292.9L13.1 118.2M190.5 290.2L15.8 115.5M193.2 287.4L18.6 112.8M195.9 284.7L21.3 110.1M198.7 282.0L24.0 107.3M201.4 279.3L26.7 104.6M204.1 276.6L29.4 101.9M206.8 273.8L32.2 99.2M209.5 271.1L34.9 96.5M212.3 268.4L37.6 93.7M215.0 265.7L40.3 91.0M217.7 262.9L43.1 88.3M220.4 260.2L45.8 85.6M223.2 257.5L48.5 82.8M225.9 254.8L51.2 80.1M228.6 252.1L53.9 77.4M231.3 249.3L56.7 74.7M234.0 246.6L59.4 72.0M236.8 243.9L62.1 69.2M239.5 241.2L64.8 66.5M242.2 238.4L67.6 63.8M244.9 235.7L70.3 61.1M247.7 233.0L73.0 58.3M250.4 230.3L75.7 55.6M253.1 227.6L78.4 52.9M255.8 224.8L81.2 50.2M258.6 222.1L83.9 47.4M261.3 219.4L86.6 44.7M264.0 216.7L89.3 42.0M266.7 213.9L92.1 39.3M269.4 211.2L94.8 36.6M272.2 208.5L97.5 33.8M274.9 205.8L100.2 31.1M277.6 203.0L103.0 28.4M280.3 200.3L105.7 25.7M283.1 197.6L108.4 22.9M285.8 194.9L111.1 20.2M288.5 192.2L113.8 17.5M291.2 189.4L116.6 14.8M293.9 186.7L119.3 12.1M296.7 184.0L122.0 9.3M299.4 181.3L124.7 6.6M302.1 178.5L127.5 3.9M304.8 175.8L130.2 1.2M307.6 173.1L132.9 -1.6M310.3 170.4L135.6 -4.3M313.0 167.7L138.3 -7.0M315.7 164.9L141.1 -9.7M318.4 162.2L143.8 -12.4M321.2 159.5L146.5 -15.2M323.9 156.8L149.2 -17.9M326.6 154.0L152.0 -20.6M329.3 151.3L154.7 -23.3M332.1 148.6L157.4 -26.1M334.8 145.9L160.1 -28.8M337.5 143.2L162.8 -31.5M340.2 140.4L165.6 -34.2M342.9 137.7L168.3 -36.9"/></g><g clip-path="url(#cL4)" stroke="#9a9a9a" stroke-width="1.05"><path d="M168.7 311.9L-5.9 137.3M171.4 309.2L-3.2 134.6M174.2 306.5L-0.5 131.8M176.9 303.8L2.2 129.1M179.6 301.1L4.9 126.4M182.3 298.3L7.7 123.7M185.0 295.6L10.4 121.0M187.8 292.9L13.1 118.2M190.5 290.2L15.8 115.5M193.2 287.4L18.6 112.8M195.9 284.7L21.3 110.1M198.7 282.0L24.0 107.3M201.4 279.3L26.7 104.6M204.1 276.6L29.4 101.9M206.8 273.8L32.2 99.2M209.5 271.1L34.9 96.5M212.3 268.4L37.6 93.7M215.0 265.7L40.3 91.0M217.7 262.9L43.1 88.3M220.4 260.2L45.8 85.6M223.2 257.5L48.5 82.8M225.9 254.8L51.2 80.1M228.6 252.1L53.9 77.4M231.3 249.3L56.7 74.7M234.0 246.6L59.4 72.0M236.8 243.9L62.1 69.2M239.5 241.2L64.8 66.5M242.2 238.4L67.6 63.8M244.9 235.7L70.3 61.1M247.7 233.0L73.0 58.3M250.4 230.3L75.7 55.6M253.1 227.6L78.4 52.9M255.8 224.8L81.2 50.2M258.6 222.1L83.9 47.4M261.3 219.4L86.6 44.7M264.0 216.7L89.3 42.0M266.7 213.9L92.1 39.3M269.4 211.2L94.8 36.6M272.2 208.5L97.5 33.8M274.9 205.8L100.2 31.1M277.6 203.0L103.0 28.4M280.3 200.3L105.7 25.7M283.1 197.6L108.4 22.9M285.8 194.9L111.1 20.2M288.5 192.2L113.8 17.5M291.2 189.4L116.6 14.8M293.9 186.7L119.3 12.1M296.7 184.0L122.0 9.3M299.4 181.3L124.7 6.6M302.1 178.5L127.5 3.9M304.8 175.8L130.2 1.2M307.6 173.1L132.9 -1.6M310.3 170.4L135.6 -4.3M313.0 167.7L138.3 -7.0M315.7 164.9L141.1 -9.7M318.4 162.2L143.8 -12.4M321.2 159.5L146.5 -15.2M323.9 156.8L149.2 -17.9M326.6 154.0L152.0 -20.6M329.3 151.3L154.7 -23.3M332.1 148.6L157.4 -26.1M334.8 145.9L160.1 -28.8M337.5 143.2L162.8 -31.5M340.2 140.4L165.6 -34.2M342.9 137.7L168.3 -36.9"/></g><path clip-path="url(#cSall)" fill="none" stroke="#c2c2c2" stroke-width="0.95" d="M84.1 118.1L80.8 120.0L80.8 123.7L77.6 121.9L74.3 123.7L74.4 120.0L71.1 118.1L74.4 116.2L74.3 112.5L77.6 114.3L80.8 112.5L80.8 116.2ZM97.2 110.7L93.9 112.6L94.0 116.3L90.7 114.5L87.5 116.3L87.5 112.6L84.2 110.7L87.5 108.8L87.5 105.1L90.7 106.9L94.0 105.1L93.9 108.8ZM97.2 125.5L93.9 127.4L94.0 131.1L90.7 129.3L87.5 131.1L87.5 127.4L84.2 125.5L87.5 123.6L87.5 119.9L90.7 121.7L94.0 119.9L93.9 123.6ZM110.3 118.1L107.0 120.0L107.0 123.7L103.8 121.9L100.5 123.7L100.6 120.0L97.3 118.1L100.6 116.2L100.5 112.5L103.8 114.3L107.0 112.5L107.0 116.2ZM110.3 132.9L107.0 134.8L107.0 138.5L103.8 136.7L100.5 138.5L100.6 134.8L97.3 132.9L100.6 131.0L100.5 127.3L103.8 129.1L107.0 127.3L107.0 131.0ZM123.4 125.5L120.1 127.4L120.1 131.1L116.9 129.3L113.6 131.1L113.7 127.4L110.4 125.5L113.7 123.6L113.6 119.9L116.9 121.7L120.1 119.9L120.1 123.6ZM123.4 140.3L120.1 142.2L120.1 145.9L116.9 144.1L113.6 145.9L113.7 142.2L110.4 140.3L113.7 138.4L113.6 134.7L116.9 136.5L120.1 134.7L120.1 138.4ZM123.4 214.3L120.1 216.2L120.1 219.9L116.9 218.1L113.6 219.9L113.7 216.2L110.4 214.3L113.7 212.4L113.6 208.7L116.9 210.5L120.1 208.7L120.1 212.4ZM136.5 118.1L133.2 120.0L133.2 123.7L130.0 121.9L126.8 123.7L126.8 120.0L123.5 118.1L126.8 116.2L126.8 112.5L130.0 114.3L133.2 112.5L133.2 116.2ZM136.5 132.9L133.2 134.8L133.2 138.5L130.0 136.7L126.8 138.5L126.8 134.8L123.5 132.9L126.8 131.0L126.8 127.3L130.0 129.1L133.2 127.3L133.2 131.0ZM136.5 147.7L133.2 149.6L133.2 153.3L130.0 151.5L126.8 153.3L126.8 149.6L123.5 147.7L126.8 145.8L126.8 142.1L130.0 143.9L133.2 142.1L133.2 145.8ZM136.5 177.3L133.2 179.2L133.2 182.9L130.0 181.1L126.8 182.9L126.8 179.2L123.5 177.3L126.8 175.4L126.8 171.7L130.0 173.5L133.2 171.7L133.2 175.4ZM136.5 192.1L133.2 194.0L133.2 197.7L130.0 195.9L126.8 197.7L126.8 194.0L123.5 192.1L126.8 190.2L126.8 186.5L130.0 188.3L133.2 186.5L133.2 190.2ZM136.5 206.9L133.2 208.8L133.2 212.5L130.0 210.7L126.8 212.5L126.8 208.8L123.5 206.9L126.8 205.0L126.8 201.3L130.0 203.1L133.2 201.3L133.2 205.0ZM149.6 81.1L146.3 83.0L146.3 86.7L143.1 84.9L139.8 86.7L139.9 83.0L136.6 81.1L139.9 79.2L139.8 75.5L143.1 77.3L146.3 75.5L146.3 79.2ZM149.6 95.9L146.3 97.8L146.3 101.5L143.1 99.7L139.8 101.5L139.9 97.8L136.6 95.9L139.9 94.0L139.8 90.3L143.1 92.1L146.3 90.3L146.3 94.0ZM149.6 110.7L146.3 112.6L146.3 116.3L143.1 114.5L139.8 116.3L139.9 112.6L136.6 110.7L139.9 108.8L139.8 105.1L143.1 106.9L146.3 105.1L146.3 108.8ZM149.6 125.5L146.3 127.4L146.3 131.1L143.1 129.3L139.8 131.1L139.9 127.4L136.6 125.5L139.9 123.6L139.8 119.9L143.1 121.7L146.3 119.9L146.3 123.6ZM149.6 140.3L146.3 142.2L146.3 145.9L143.1 144.1L139.8 145.9L139.9 142.2L136.6 140.3L139.9 138.4L139.8 134.7L143.1 136.5L146.3 134.7L146.3 138.4ZM149.6 169.9L146.3 171.8L146.3 175.5L143.1 173.7L139.8 175.5L139.9 171.8L136.6 169.9L139.9 168.0L139.8 164.3L143.1 166.1L146.3 164.3L146.3 168.0ZM149.6 184.7L146.3 186.6L146.3 190.3L143.1 188.5L139.8 190.3L139.9 186.6L136.6 184.7L139.9 182.8L139.8 179.1L143.1 180.9L146.3 179.1L146.3 182.8ZM149.6 199.5L146.3 201.4L146.3 205.1L143.1 203.3L139.8 205.1L139.9 201.4L136.6 199.5L139.9 197.6L139.8 193.9L143.1 195.7L146.3 193.9L146.3 197.6ZM162.7 58.9L159.4 60.8L159.4 64.5L156.2 62.7L152.9 64.5L153.0 60.8L149.7 58.9L153.0 57.0L152.9 53.3L156.2 55.1L159.4 53.3L159.4 57.0ZM162.7 73.7L159.4 75.6L159.4 79.3L156.2 77.5L152.9 79.3L153.0 75.6L149.7 73.7L153.0 71.8L152.9 68.1L156.2 69.9L159.4 68.1L159.4 71.8ZM162.7 88.5L159.4 90.4L159.4 94.1L156.2 92.3L152.9 94.1L153.0 90.4L149.7 88.5L153.0 86.6L152.9 82.9L156.2 84.7L159.4 82.9L159.4 86.6ZM162.7 103.3L159.4 105.2L159.4 108.9L156.2 107.1L152.9 108.9L153.0 105.2L149.7 103.3L153.0 101.4L152.9 97.7L156.2 99.5L159.4 97.7L159.4 101.4ZM162.7 118.1L159.4 120.0L159.4 123.7L156.2 121.9L152.9 123.7L153.0 120.0L149.7 118.1L153.0 116.2L152.9 112.5L156.2 114.3L159.4 112.5L159.4 116.2ZM162.7 132.9L159.4 134.8L159.4 138.5L156.2 136.7L152.9 138.5L153.0 134.8L149.7 132.9L153.0 131.0L152.9 127.3L156.2 129.1L159.4 127.3L159.4 131.0ZM162.7 162.5L159.4 164.4L159.4 168.1L156.2 166.3L152.9 168.1L153.0 164.4L149.7 162.5L153.0 160.6L152.9 156.9L156.2 158.7L159.4 156.9L159.4 160.6ZM162.7 177.3L159.4 179.2L159.4 182.9L156.2 181.1L152.9 182.9L153.0 179.2L149.7 177.3L153.0 175.4L152.9 171.7L156.2 173.5L159.4 171.7L159.4 175.4ZM162.7 192.1L159.4 194.0L159.4 197.7L156.2 195.9L152.9 197.7L153.0 194.0L149.7 192.1L153.0 190.2L152.9 186.5L156.2 188.3L159.4 186.5L159.4 190.2ZM175.8 21.9L172.5 23.8L172.6 27.5L169.3 25.7L166.1 27.5L166.1 23.8L162.8 21.9L166.1 20.0L166.1 16.3L169.3 18.1L172.6 16.3L172.5 20.0ZM175.8 36.7L172.5 38.6L172.6 42.3L169.3 40.5L166.1 42.3L166.1 38.6L162.8 36.7L166.1 34.8L166.1 31.1L169.3 32.9L172.6 31.1L172.5 34.8ZM175.8 51.5L172.5 53.4L172.6 57.1L169.3 55.3L166.1 57.1L166.1 53.4L162.8 51.5L166.1 49.6L166.1 45.9L169.3 47.7L172.6 45.9L172.5 49.6ZM175.8 66.3L172.5 68.2L172.6 71.9L169.3 70.1L166.1 71.9L166.1 68.2L162.8 66.3L166.1 64.4L166.1 60.7L169.3 62.5L172.6 60.7L172.5 64.4ZM175.8 81.1L172.5 83.0L172.6 86.7L169.3 84.9L166.1 86.7L166.1 83.0L162.8 81.1L166.1 79.2L166.1 75.5L169.3 77.3L172.6 75.5L172.5 79.2ZM175.8 95.9L172.5 97.8L172.6 101.5L169.3 99.7L166.1 101.5L166.1 97.8L162.8 95.9L166.1 94.0L166.1 90.3L169.3 92.1L172.6 90.3L172.5 94.0ZM175.8 110.7L172.5 112.6L172.6 116.3L169.3 114.5L166.1 116.3L166.1 112.6L162.8 110.7L166.1 108.8L166.1 105.1L169.3 106.9L172.6 105.1L172.5 108.8ZM175.8 125.5L172.5 127.4L172.6 131.1L169.3 129.3L166.1 131.1L166.1 127.4L162.8 125.5L166.1 123.6L166.1 119.9L169.3 121.7L172.6 119.9L172.5 123.6ZM175.8 140.3L172.5 142.2L172.6 145.9L169.3 144.1L166.1 145.9L166.1 142.2L162.8 140.3L166.1 138.4L166.1 134.7L169.3 136.5L172.6 134.7L172.5 138.4ZM175.8 155.1L172.5 157.0L172.6 160.7L169.3 158.9L166.1 160.7L166.1 157.0L162.8 155.1L166.1 153.2L166.1 149.5L169.3 151.3L172.6 149.5L172.5 153.2ZM175.8 169.9L172.5 171.8L172.6 175.5L169.3 173.7L166.1 175.5L166.1 171.8L162.8 169.9L166.1 168.0L166.1 164.3L169.3 166.1L172.6 164.3L172.5 168.0ZM175.8 184.7L172.5 186.6L172.6 190.3L169.3 188.5L166.1 190.3L166.1 186.6L162.8 184.7L166.1 182.8L166.1 179.1L169.3 180.9L172.6 179.1L172.5 182.8ZM188.9 118.1L185.6 120.0L185.7 123.7L182.4 121.9L179.2 123.7L179.2 120.0L175.9 118.1L179.2 116.2L179.2 112.5L182.4 114.3L185.7 112.5L185.6 116.2ZM188.9 132.9L185.6 134.8L185.7 138.5L182.4 136.7L179.2 138.5L179.2 134.8L175.9 132.9L179.2 131.0L179.2 127.3L182.4 129.1L185.7 127.3L185.6 131.0ZM188.9 147.7L185.6 149.6L185.7 153.3L182.4 151.5L179.2 153.3L179.2 149.6L175.9 147.7L179.2 145.8L179.2 142.1L182.4 143.9L185.7 142.1L185.6 145.8ZM202.0 95.9L198.7 97.8L198.8 101.5L195.5 99.7L192.2 101.5L192.3 97.8L189.0 95.9L192.3 94.0L192.2 90.3L195.5 92.1L198.8 90.3L198.7 94.0ZM202.0 110.7L198.7 112.6L198.8 116.3L195.5 114.5L192.2 116.3L192.3 112.6L189.0 110.7L192.3 108.8L192.2 105.1L195.5 106.9L198.8 105.1L198.7 108.8ZM202.0 125.5L198.7 127.4L198.8 131.1L195.5 129.3L192.2 131.1L192.3 127.4L189.0 125.5L192.3 123.6L192.2 119.9L195.5 121.7L198.8 119.9L198.7 123.6ZM202.0 140.3L198.7 142.2L198.8 145.9L195.5 144.1L192.2 145.9L192.3 142.2L189.0 140.3L192.3 138.4L192.2 134.7L195.5 136.5L198.8 134.7L198.7 138.4ZM202.0 155.1L198.7 157.0L198.8 160.7L195.5 158.9L192.2 160.7L192.3 157.0L189.0 155.1L192.3 153.2L192.2 149.5L195.5 151.3L198.8 149.5L198.7 153.2ZM202.0 169.9L198.7 171.8L198.8 175.5L195.5 173.7L192.2 175.5L192.3 171.8L189.0 169.9L192.3 168.0L192.2 164.3L195.5 166.1L198.8 164.3L198.7 168.0ZM202.0 184.7L198.7 186.6L198.8 190.3L195.5 188.5L192.2 190.3L192.3 186.6L189.0 184.7L192.3 182.8L192.2 179.1L195.5 180.9L198.8 179.1L198.7 182.8ZM215.1 103.3L211.8 105.2L211.8 108.9L208.6 107.1L205.3 108.9L205.4 105.2L202.1 103.3L205.4 101.4L205.3 97.7L208.6 99.5L211.8 97.7L211.8 101.4ZM215.1 118.1L211.8 120.0L211.8 123.7L208.6 121.9L205.3 123.7L205.4 120.0L202.1 118.1L205.4 116.2L205.3 112.5L208.6 114.3L211.8 112.5L211.8 116.2ZM215.1 147.7L211.8 149.6L211.8 153.3L208.6 151.5L205.3 153.3L205.4 149.6L202.1 147.7L205.4 145.8L205.3 142.1L208.6 143.9L211.8 142.1L211.8 145.8ZM215.1 162.5L211.8 164.4L211.8 168.1L208.6 166.3L205.3 168.1L205.4 164.4L202.1 162.5L205.4 160.6L205.3 156.9L208.6 158.7L211.8 156.9L211.8 160.6ZM215.1 177.3L211.8 179.2L211.8 182.9L208.6 181.1L205.3 182.9L205.4 179.2L202.1 177.3L205.4 175.4L205.3 171.7L208.6 173.5L211.8 171.7L211.8 175.4ZM215.1 192.1L211.8 194.0L211.8 197.7L208.6 195.9L205.3 197.7L205.4 194.0L202.1 192.1L205.4 190.2L205.3 186.5L208.6 188.3L211.8 186.5L211.8 190.2ZM228.2 95.9L224.9 97.8L224.9 101.5L221.7 99.7L218.4 101.5L218.5 97.8L215.2 95.9L218.5 94.0L218.4 90.3L221.7 92.1L224.9 90.3L224.9 94.0ZM228.2 110.7L224.9 112.6L224.9 116.3L221.7 114.5L218.4 116.3L218.5 112.6L215.2 110.7L218.5 108.8L218.4 105.1L221.7 106.9L224.9 105.1L224.9 108.8ZM228.2 125.5L224.9 127.4L224.9 131.1L221.7 129.3L218.4 131.1L218.5 127.4L215.2 125.5L218.5 123.6L218.4 119.9L221.7 121.7L224.9 119.9L224.9 123.6ZM228.2 169.9L224.9 171.8L224.9 175.5L221.7 173.7L218.4 175.5L218.5 171.8L215.2 169.9L218.5 168.0L218.4 164.3L221.7 166.1L224.9 164.3L224.9 168.0ZM228.2 184.7L224.9 186.6L224.9 190.3L221.7 188.5L218.4 190.3L218.5 186.6L215.2 184.7L218.5 182.8L218.4 179.1L221.7 180.9L224.9 179.1L224.9 182.8ZM228.2 199.5L224.9 201.4L224.9 205.1L221.7 203.3L218.4 205.1L218.5 201.4L215.2 199.5L218.5 197.6L218.4 193.9L221.7 195.7L224.9 193.9L224.9 197.6ZM241.3 103.3L238.0 105.2L238.0 108.9L234.8 107.1L231.5 108.9L231.6 105.2L228.3 103.3L231.6 101.4L231.5 97.7L234.8 99.5L238.0 97.7L238.0 101.4ZM241.3 118.1L238.0 120.0L238.0 123.7L234.8 121.9L231.5 123.7L231.6 120.0L228.3 118.1L231.6 116.2L231.5 112.5L234.8 114.3L238.0 112.5L238.0 116.2ZM241.3 221.7L238.0 223.6L238.0 227.3L234.8 225.5L231.5 227.3L231.6 223.6L228.3 221.7L231.6 219.8L231.5 216.1L234.8 217.9L238.0 216.1L238.0 219.8ZM254.4 110.7L251.1 112.6L251.1 116.3L247.9 114.5L244.6 116.3L244.7 112.6L241.4 110.7L244.7 108.8L244.6 105.1L247.9 106.9L251.1 105.1L251.1 108.8ZM267.5 103.3L264.2 105.2L264.2 108.9L261.0 107.1L257.8 108.9L257.8 105.2L254.5 103.3L257.8 101.4L257.8 97.7L261.0 99.5L264.2 97.7L264.2 101.4Z"/><circle cx="168.50" cy="137.50" r="119.50" fill="none" stroke="#c4c4c4" stroke-width="1"/><polygon points="168.30,18.00 141.70,99.88 55.60,99.88 125.25,150.49 98.65,232.37 168.30,181.76 237.95,232.37 211.35,150.49 281.00,99.88 194.90,99.88" fill="none" stroke="#cfcfcf" stroke-width="0.95"/><path d="M168.30 136.50 L168.30 18.00 M168.30 136.50 L141.70 99.88 M168.30 136.50 L55.60 99.88 M168.30 136.50 L125.25 150.49 M168.30 136.50 L98.65 232.37 M168.30 136.50 L168.30 181.76 M168.30 136.50 L237.95 232.37 M168.30 136.50 L211.35 150.49 M168.30 136.50 L281.00 99.88 M168.30 136.50 L194.90 99.88 " stroke="#cfcfcf" stroke-width="0.9" fill="none"/><circle cx="168.30" cy="136.50" r="1.6" fill="#fff"/><g stroke="#d0d0d0" stroke-width="1" fill="none"><rect x="35.2" y="241.5" width="5" height="5"/><path d="M37.7 241.5 L37.7 212.0 M35.7 216.5 L37.7 211.7 L39.7 216.5"/><path d="M40.2 244.0 L72 244.0 M67.5 242.0 L72.3 244.0 L67.5 246.0"/></g><text x="35" y="207.5" font-family="Liberation Sans, sans-serif" font-size="8" fill="#d0d0d0">Y</text><text x="74.3" y="246.9" font-family="Liberation Sans, sans-serif" font-size="8" fill="#d0d0d0">X</text></svg>
<div style="left:617.0px;top:127.0px;width:1.6px;height:316.0px;background:#8f919b;"></div>
<div style="left:618.6px;top:127.0px;width:229.4px;height:316.0px;background:#e8e9ef;"></div>
<div style="left:624.9px;top:133.5px;width:192.4px;height:11.0px;background:#fafafc;border:1px solid #9a9da8;"></div><div style="left:808.3px;top:134.5px;width:8.0px;height:9.0px;background:#e6e7ee;border-left:1px solid #b0b3bd;"></div><svg style="left:809.5px;top:136.8px" width="6" height="5" viewBox="0 0 6 5"><path d="M.7 1 L3 3.6 L5.3 1" stroke="#555" stroke-width="1" fill="none"/></svg>
<span style="left:628.0px;top:134px;height:11px;line-height:11px;font-size:7.60px;font-weight:bold;transform-origin:0 50%;transform:scaleX(0.8342);color:#111;">No Selection</span>
<div style="left:625.8px;top:149.0px;width:14.6px;height:13.8px;background:#d4ddd4;border:1px solid #9a9da8;"></div>
<svg style="left:625.8px;top:149.0px" width="14.6" height="13.8" viewBox="0 0 14.6 13.8"><circle cx="6" cy="7.5" r="3.2" fill="none" stroke="#3a9a9a" stroke-width="1.3"/><path d="M4 10 L9 4" stroke="#c9a227" stroke-width="1.3"/><path d="M9 2 L12 3.5 L9.5 5.5Z" fill="#2a9a38"/></svg>
<div style="left:643.8px;top:149.0px;width:14.6px;height:13.8px;background:#e2e3e8;border:1px solid #9a9da8;"></div>
<svg style="left:643.8px;top:149.0px" width="14.6" height="13.8" viewBox="0 0 14.6 13.8"><path d="M5 3 L5 10.5 L7 8.8 L8.6 12 L9.8 11.4 L8.3 8.3 L10.8 8.3Z" fill="#fff" stroke="#222" stroke-width=".8"/><path d="M2.5 2.5 L7 2.5" stroke="#555" stroke-width=".8" stroke-dasharray="1 1"/></svg>
<div style="left:661.9px;top:149.0px;width:14.6px;height:13.8px;background:#e2e3e8;border:1px solid #9a9da8;"></div>
<svg style="left:661.9px;top:149.0px" width="14.6" height="13.8" viewBox="0 0 14.6 13.8"><rect x="2.5" y="2.5" width="8" height="8" fill="none" stroke="#3a78c8" stroke-width=".9" stroke-dasharray="1.4 1"/><path d="M6.5 4.5 L6.5 11.5 L8.2 10 L9.6 12.8 L10.6 12.3 L9.3 9.6 L11.6 9.6Z" fill="#fff" stroke="#222" stroke-width=".8"/></svg>
<div style="left:679.9px;top:149.0px;width:14.6px;height:13.8px;background:#e2e3e8;border:1px solid #9a9da8;"></div>
<svg style="left:679.9px;top:149.0px" width="14.6" height="13.8" viewBox="0 0 14.6 13.8"><rect x="2" y="2.5" width="9.5" height="2.4" fill="#3a78c8"/><path d="M2 6.5 L9 6.5 M2 8.8 L8 8.8 M2 11 L6.5 11" stroke="#555" stroke-width=".9"/><path d="M9.5 8 L11.5 8.5 L10 12Z" fill="#e0a020"/></svg>
<div style="left:698.0px;top:149.0px;width:14.6px;height:13.8px;background:#e2e3e8;border:1px solid #9a9da8;"></div>
<svg style="left:698.0px;top:149.0px" width="14.6" height="13.8" viewBox="0 0 14.6 13.8"><text x="4.3" y="11.2" font-family="Liberation Sans, sans-serif" font-size="10" font-weight="bold" fill="#222">?</text></svg>
<div style="left:625.2px;top:166.3px;width:191.3px;height:271.3px;background:#f6f6fa;border:1px solid #b8bac4;"></div>
<div style="left:806.0px;top:167.3px;width:9.5px;height:269.3px;background:#eeeff3;"></div>
<div style="left:806.0px;top:180.0px;width:9.5px;height:161.0px;background:#c6c7cd;"></div>
<svg style="left:806.5px;top:170.5px" width="9" height="6" viewBox="0 0 9 6"><path d="M1 5 L4.5 1 L8 5Z" fill="#111"/></svg>
<svg style="left:806.5px;top:427.5px" width="9" height="6" viewBox="0 0 9 6"><path d="M1 1 L4.5 5 L8 1Z" fill="#111"/></svg>
<div style="left:632.4px;top:172.0px;width:167.0px;height:10.5px;background:#dcdcf2;border:1px solid #b4b4d0;"></div><span style="left:634.7px;top:172px;height:11px;line-height:11px;font-size:7.60px;font-weight:bold;transform-origin:0 50%;transform:scaleX(0.9751);color:#111;">General</span><svg style="left:790.5px;top:174.9px" width="7" height="5" viewBox="0 0 7 5"><path d="M.3 4.3 L3.5 .5 L6.7 4.3Z" fill="#111"/></svg>
<div style="left:632.4px;top:296.8px;width:167.0px;height:10.0px;background:#dcdcf2;border:1px solid #b4b4d0;"></div><span style="left:634.7px;top:297px;height:11px;line-height:11px;font-size:7.60px;font-weight:bold;transform-origin:0 50%;transform:scaleX(1.0091);color:#111;">PrintStyle</span><svg style="left:790.5px;top:299.5px" width="7" height="5" viewBox="0 0 7 5"><path d="M.3 4.3 L3.5 .5 L6.7 4.3Z" fill="#111"/></svg>
<div style="left:632.4px;top:376.2px;width:167.0px;height:9.6px;background:#dcdcf2;border:1px solid #b4b4d0;"></div><span style="left:634.7px;top:376px;height:11px;line-height:11px;font-size:7.60px;font-weight:bold;transform-origin:0 50%;transform:scaleX(1.0069);color:#111;">View</span><svg style="left:790.5px;top:378.7px" width="7" height="5" viewBox="0 0 7 5"><path d="M.3 4.3 L3.5 .5 L6.7 4.3Z" fill="#111"/></svg>
<div style="left:657.0px;top:191.0px;width:142.3px;height:11.6px;background:#fdfdfe;border:1px solid #b6b8c4;"></div>
<div style="left:657.0px;top:205.7px;width:142.3px;height:11.6px;background:#fdfdfe;border:1px solid #b6b8c4;"></div><div style="left:791.0px;top:206.7px;width:7.3px;height:9.6px;background:#e6e7ee;border-left:1px solid #b8bac4;"></div><svg style="left:791.9px;top:209.2px" width="6" height="5" viewBox="0 0 6 5"><path d="M.7 1 L3 3.6 L5.3 1" stroke="#555" stroke-width="1" fill="none"/></svg><span style="left:659.2px;top:206px;height:11px;line-height:11px;font-size:7.60px;color:#111;">0</span>
<div style="left:657.0px;top:220.5px;width:142.3px;height:11.6px;background:#fdfdfe;border:1px solid #b6b8c4;"></div><div style="left:791.0px;top:221.5px;width:7.3px;height:9.6px;background:#e6e7ee;border-left:1px solid #b8bac4;"></div><svg style="left:791.9px;top:224.0px" width="6" height="5" viewBox="0 0 6 5"><path d="M.7 1 L3 3.6 L5.3 1" stroke="#555" stroke-width="1" fill="none"/></svg><span style="left:671.5px;top:221px;height:11px;line-height:11px;font-size:7.60px;transform-origin:0 50%;transform:scaleX(0.8572);color:#111;">ByLayer</span>
<svg style="left:660.5px;top:222.6px" width="8" height="8" viewBox="0 0 8 8"><circle cx="3.6" cy="3.6" r="2.9" fill="#fff" stroke="#333" stroke-width=".9"/></svg>
<div style="left:657.0px;top:235.3px;width:142.3px;height:11.6px;background:#fdfdfe;border:1px solid #b6b8c4;"></div><span style="left:659.2px;top:236px;height:11px;line-height:11px;font-size:7.60px;transform-origin:0 50%;transform:scaleX(0.9034);color:#111;">1.0000</span>
<div style="left:657.0px;top:250.0px;width:142.3px;height:11.6px;background:#fdfdfe;border:1px solid #b6b8c4;"></div><div style="left:791.0px;top:251.0px;width:7.3px;height:9.6px;background:#e6e7ee;border-left:1px solid #b8bac4;"></div><svg style="left:791.9px;top:253.5px" width="6" height="5" viewBox="0 0 6 5"><path d="M.7 1 L3 3.6 L5.3 1" stroke="#555" stroke-width="1" fill="none"/></svg><span style="left:659.2px;top:250px;height:11px;line-height:11px;font-size:7.60px;transform-origin:0 50%;transform:scaleX(0.8536);color:#111;">ByLayer</span>
<span style="left:693.7px;top:250px;height:11px;line-height:11px;font-size:7.60px;transform-origin:0 50%;transform:scaleX(0.9046);color:#111;">Solid line</span>
<div style="left:657.0px;top:264.7px;width:142.3px;height:11.6px;background:#fdfdfe;border:1px solid #b6b8c4;"></div><div style="left:791.0px;top:265.7px;width:7.3px;height:9.6px;background:#e6e7ee;border-left:1px solid #b8bac4;"></div><svg style="left:791.9px;top:268.2px" width="6" height="5" viewBox="0 0 6 5"><path d="M.7 1 L3 3.6 L5.3 1" stroke="#555" stroke-width="1" fill="none"/></svg><span style="left:678.4px;top:265px;height:11px;line-height:11px;font-size:7.60px;transform-origin:0 50%;transform:scaleX(0.8536);color:#111;">ByLayer</span>
<div style="left:659.2px;top:270.0px;width:17.4px;height:1.0px;background:#222;"></div>
<div style="left:657.0px;top:279.5px;width:142.3px;height:11.6px;background:#fdfdfe;border:1px solid #b6b8c4;"></div><span style="left:659.2px;top:280px;height:11px;line-height:11px;font-size:7.60px;transform-origin:0 50%;transform:scaleX(0.8536);color:#111;">ByLayer</span>
<div style="left:657.0px;top:314.5px;width:142.3px;height:11.6px;background:#fdfdfe;border:1px solid #b6b8c4;"></div><div style="left:791.0px;top:315.5px;width:7.3px;height:9.6px;background:#e6e7ee;border-left:1px solid #b8bac4;"></div><svg style="left:791.9px;top:318.0px" width="6" height="5" viewBox="0 0 6 5"><path d="M.7 1 L3 3.6 L5.3 1" stroke="#555" stroke-width="1" fill="none"/></svg><span style="left:659.2px;top:315px;height:11px;line-height:11px;font-size:7.60px;transform-origin:0 50%;transform:scaleX(0.8234);color:#111;">No</span>
<div style="left:657.0px;top:329.3px;width:142.3px;height:11.6px;background:#fdfdfe;border:1px solid #b6b8c4;"></div><div style="left:791.0px;top:330.3px;width:7.3px;height:9.6px;background:#e6e7ee;border-left:1px solid #b8bac4;"></div><svg style="left:791.9px;top:332.8px" width="6" height="5" viewBox="0 0 6 5"><path d="M.7 1 L3 3.6 L5.3 1" stroke="#555" stroke-width="1" fill="none"/></svg><span style="left:659.2px;top:330px;height:11px;line-height:11px;font-size:7.60px;transform-origin:0 50%;transform:scaleX(0.9293);color:#111;">monochrome.ctb</span>
<div style="left:657.0px;top:344.1px;width:142.3px;height:11.6px;background:#dedfe5;border:1px solid #b6b8c4;"></div><div style="left:791.0px;top:345.1px;width:7.3px;height:9.6px;background:#d0d1d8;border-left:1px solid #b8bac4;"></div><svg style="left:791.9px;top:347.6px" width="6" height="5" viewBox="0 0 6 5"><path d="M.7 1 L3 3.6 L5.3 1" stroke="#555" stroke-width="1" fill="none"/></svg><span style="left:659.2px;top:345px;height:11px;line-height:11px;font-size:7.60px;transform-origin:0 50%;transform:scaleX(0.8139);color:#8a8d96;">ByColor</span>
<div style="left:657.0px;top:358.8px;width:142.3px;height:11.6px;background:#a9c8f0;border:1px solid #b6b8c4;"></div><span style="left:659.2px;top:359px;height:11px;line-height:11px;font-size:7.60px;transform-origin:0 50%;transform:scaleX(0.8806);color:#111;">None</span>
<div style="left:657.0px;top:394.7px;width:142.3px;height:11.6px;background:#a9c8f0;border:1px solid #b6b8c4;"></div><span style="left:659.2px;top:395px;height:11px;line-height:11px;font-size:7.60px;transform-origin:0 50%;transform:scaleX(0.9249);color:#111;">3.7990</span>
<div style="left:657.0px;top:409.6px;width:142.3px;height:11.6px;background:#a9c8f0;border:1px solid #b6b8c4;"></div><span style="left:659.2px;top:410px;height:11px;line-height:11px;font-size:7.60px;transform-origin:0 50%;transform:scaleX(0.9249);color:#111;">4.8755</span>
<div style="left:657.0px;top:424.3px;width:142.3px;height:11.6px;background:#a9c8f0;border:1px solid #b6b8c4;"></div><span style="left:659.2px;top:425px;height:11px;line-height:11px;font-size:7.60px;transform-origin:0 50%;transform:scaleX(0.9249);color:#111;">0.0000</span>
<div style="left:626.0px;top:437.0px;width:190.5px;height:6.0px;background:#f2f3f7;"></div>
<svg style="left:637.6px;top:191.7px" width="12" height="10" viewBox="0 0 12 10"><g transform="rotate(-38 6 5)" fill="none" stroke="#2f9ad6" stroke-width="1.3"><rect x=".8" y="3" width="5.6" height="4" rx="2"/><rect x="5.6" y="3" width="5.6" height="4" rx="2"/></g></svg>
<svg style="left:637.6px;top:205.9px" width="12" height="11" viewBox="0 0 12 11"><path d="M1 3.5 L6 2 L11 3.5 L6 5Z" fill="#f0c838" stroke="#6e5a10" stroke-width=".7"/><path d="M1 5.8 L6 4.3 L11 5.8 L6 7.3Z" fill="#e0b020" stroke="#6e5a10" stroke-width=".7"/><path d="M1 8 L6 6.5 L11 8 L6 9.5Z" fill="#d09a10" stroke="#6e5a10" stroke-width=".7"/></svg>
<svg style="left:637.6px;top:220.7px" width="13" height="11" viewBox="0 0 13 11"><path d="M1.5 5.5 L5.5 1.5 L9.5 5.5 L5.5 9.5Z" fill="#5a6a7a" stroke="#333" stroke-width=".6"/><circle cx="9.5" cy="7.5" r="2.2" fill="#3a78c8"/><circle cx="3.5" cy="8.2" r="1.5" fill="#c9a227"/></svg>
<svg style="left:637.1px;top:236.5px" width="13" height="9" viewBox="0 0 13 9"><path d="M0 1 L13 1" stroke="#555" stroke-width="1" stroke-dasharray="3 1.2"/><path d="M0 4.5 L13 4.5" stroke="#555" stroke-width="1" stroke-dasharray="1.5 1"/><path d="M0 8 L13 8" stroke="#555" stroke-width="1" stroke-dasharray="4 1 1 1"/></svg>
<svg style="left:637.1px;top:251.2px" width="13" height="9" viewBox="0 0 13 9"><path d="M0 1 L13 1" stroke="#555" stroke-width="1" stroke-dasharray="3 1.2"/><path d="M0 4.5 L13 4.5" stroke="#555" stroke-width="1" stroke-dasharray="1.5 1"/><path d="M0 8 L13 8" stroke="#555" stroke-width="1" stroke-dasharray="4 1 1 1"/></svg>
<svg style="left:637.6px;top:265.4px" width="12" height="10" viewBox="0 0 12 10"><path d="M1 1.2 L11 1.2" stroke="#111" stroke-width="1"/><path d="M1 4.6 L11 4.6" stroke="#111" stroke-width="1.9"/><path d="M1 8.4 L11 8.4" stroke="#111" stroke-width="2.6"/></svg>
<svg style="left:638.1px;top:279.7px" width="11" height="11" viewBox="0 0 11 11"><rect x="0.5" y="0.5" width="2.6" height="2.6" fill="#5a5f6a"/><rect x="0.5" y="3.1" width="2.6" height="2.6" fill="#e4e6ee"/><rect x="0.5" y="5.7" width="2.6" height="2.6" fill="#5a5f6a"/><rect x="0.5" y="8.3" width="2.6" height="2.6" fill="#e4e6ee"/><rect x="3.1" y="0.5" width="2.6" height="2.6" fill="#e4e6ee"/><rect x="3.1" y="3.1" width="2.6" height="2.6" fill="#5a5f6a"/><rect x="3.1" y="5.7" width="2.6" height="2.6" fill="#e4e6ee"/><rect x="3.1" y="8.3" width="2.6" height="2.6" fill="#5a5f6a"/><rect x="5.7" y="0.5" width="2.6" height="2.6" fill="#5a5f6a"/><rect x="5.7" y="3.1" width="2.6" height="2.6" fill="#e4e6ee"/><rect x="5.7" y="5.7" width="2.6" height="2.6" fill="#5a5f6a"/><rect x="5.7" y="8.3" width="2.6" height="2.6" fill="#e4e6ee"/><rect x="8.3" y="0.5" width="2.6" height="2.6" fill="#e4e6ee"/><rect x="8.3" y="3.1" width="2.6" height="2.6" fill="#5a5f6a"/><rect x="8.3" y="5.7" width="2.6" height="2.6" fill="#e4e6ee"/><rect x="8.3" y="8.3" width="2.6" height="2.6" fill="#5a5f6a"/></svg>
<svg style="left:637.1px;top:313.7px" width="13" height="13" viewBox="0 0 13 13"><ellipse cx="6.5" cy="6.5" rx="5.6" ry="4" fill="#f8f8f2" stroke="#777" stroke-width=".8"/><path d="M1 6.5 L12 6.5" stroke="#3a9a3a" stroke-width=".9"/><path d="M6.5 1 L6.5 12" stroke="#c9a227" stroke-width="1.2"/></svg>
<svg style="left:637.1px;top:328.5px" width="14" height="13" viewBox="0 0 14 13"><rect x="1" y="1" width="9" height="9" fill="#fff" stroke="#444" stroke-width=".8"/><rect x="1.8" y="1.8" width="7.4" height="2.2" fill="#3a78c8"/><rect x="2" y="5" width="2" height="4" fill="#d03a2a"/><rect x="4.6" y="5" width="2" height="4" fill="#3a9a3a"/><path d="M12.5 2 L7 11" stroke="#d89a10" stroke-width="1.8"/></svg>
<svg style="left:637.1px;top:343.3px" width="14" height="13" viewBox="0 0 14 13"><rect x="1" y="1" width="2.2" height="10.5" fill="#d03a2a"/><rect x="4" y="1" width="2.2" height="10.5" fill="#3a9a3a"/><rect x="7" y="1" width="2" height="10.5" fill="#3a6ad0"/><path d="M12.5 1.5 L8.5 11" stroke="#d89a10" stroke-width="1.7"/></svg>
<svg style="left:637.1px;top:358.0px" width="14" height="13" viewBox="0 0 14 13"><rect x="1" y="1" width="2.2" height="10.5" fill="#d03a2a"/><rect x="4" y="1" width="1.6" height="10.5" fill="#222"/><path d="M7 3 L12.5 3 M7 5.8 L12.5 5.8 M7 8.6 L12.5 8.6 M7 11.2 L12.5 11.2" stroke="#222" stroke-width="1.1"/><circle cx="10.5" cy="1.5" r="1.2" fill="#555"/></svg>
<svg style="left:637.1px;top:394.4px" width="13" height="13" viewBox="0 0 13 13"><circle cx="6.2" cy="6.2" r="4.8" fill="#fafafa" stroke="#666" stroke-width=".9"/><path d="M6.2 6.2 L9 8.5" stroke="#666" stroke-width=".8"/><circle cx="6.2" cy="6.2" r=".9" fill="#3a9a3a"/><path d="M9.5 9.5 L12 11.5" stroke="#666" stroke-width="1.2"/></svg>
<svg style="left:637.1px;top:409.3px" width="13" height="13" viewBox="0 0 13 13"><circle cx="6.2" cy="6.2" r="4.8" fill="#fafafa" stroke="#666" stroke-width=".9"/><path d="M6.2 6.2 L9 8.5" stroke="#666" stroke-width=".8"/><circle cx="6.2" cy="6.2" r=".9" fill="#3a9a3a"/><path d="M9.5 9.5 L12 11.5" stroke="#666" stroke-width="1.2"/></svg>
<svg style="left:637.1px;top:424.0px" width="13" height="13" viewBox="0 0 13 13"><circle cx="6.2" cy="6.2" r="4.8" fill="#fafafa" stroke="#666" stroke-width=".9"/><path d="M6.2 6.2 L9 8.5" stroke="#666" stroke-width=".8"/><circle cx="6.2" cy="6.2" r=".9" fill="#3a9a3a"/><path d="M9.5 9.5 L12 11.5" stroke="#666" stroke-width="1.2"/></svg>
<div style="left:826.3px;top:127.0px;width:11.7px;height:316.0px;background:#b9bbc3;"></div>
<div style="left:816.5px;top:127.0px;width:9.8px;height:316.0px;background:#e8e9ef;"></div>
<svg style="left:826.5px;top:129.5px" width="9" height="9" viewBox="0 0 9 9"><path d="M1.5 1.5 L7 7 M7 1.5 L1.5 7" stroke="#111" stroke-width="1.7"/></svg>
<svg style="left:826.5px;top:145.5px" width="9" height="10" viewBox="0 0 9 10"><path d="M2 1 L7 1 M3 1 L3 5 M6 1 L6 5 M1.2 5.4 L7.8 5.4 M4.5 5.5 L4.5 9.5" stroke="#111" stroke-width="1.3"/></svg>
<div style="left:838.0px;top:127.0px;width:10.0px;height:316.0px;background:#e0e1e8;border-left:1px solid #a8aab4;"></div>
<div style="left:838.0px;top:271.5px;width:10.0px;height:47.0px;background:#fafafc;border:1px solid #a8aab4;border-left:none;"></div>
<div style="left:838.0px;top:193.5px;width:10.0px;height:1.0px;background:#a8aab4;"></div>
<div style="left:838.0px;top:241.0px;width:10.0px;height:1.0px;background:#a8aab4;"></div>
<span style="left:838.7px;top:188.2px;width:63.3px;height:9.1px;line-height:9.1px;font-size:7.60px;color:#222;transform-origin:0 0;transform:rotate(-90deg) scaleX(0.8914);">G-code Generator</span>
<span style="left:838.7px;top:235.8px;width:41.7px;height:9.1px;line-height:9.1px;font-size:7.60px;color:#222;transform-origin:0 0;transform:rotate(-90deg) scaleX(0.8766);">HomeByMe</span>
<span style="left:838.7px;top:266.5px;width:22.3px;height:9.1px;line-height:9.1px;font-size:7.60px;color:#222;transform-origin:0 0;transform:rotate(-90deg) scaleX(0.8879);">Home</span>
<span style="left:838.7px;top:313.0px;width:36.6px;height:9.1px;line-height:9.1px;font-size:7.60px;color:#222;transform-origin:0 0;transform:rotate(-90deg) scaleX(1.0393);">Properties</span>
<span style="left:826.8px;top:426.0px;width:40.6px;height:9.4px;line-height:9.4px;font-size:7.80px;font-weight:bold;color:#111;transform-origin:0 0;transform:rotate(-90deg) scaleX(0.9849);">Properties</span>
<svg style="left:826.5px;top:430.0px" width="9" height="10" viewBox="0 0 9 10"><rect x="1" y="1" width="2" height="7.5" fill="#d03a2a"/><rect x="3.6" y="2.5" width="2" height="6" fill="#3a9a3a"/><rect x="6.2" y="1" width="2" height="7.5" fill="#222"/></svg>
<div style="left:0.0px;top:432.0px;width:618.0px;height:11.0px;background:#f3f4f8;"></div>
<svg style="left:0.0px;top:432.0px" width="110" height="11" viewBox="0 0 110 11"><path d="M0 0 L0 8.9 L27.2 8.9 L31 0Z" fill="#fdfdfe"/><path d="M31.2 0 L35.5 8.9 L63.5 8.9 L67.8 0Z" fill="#e4e5ea"/><path d="M68.4 0 L72.6 8.9 L102.4 8.9 L106.7 0Z" fill="#e4e5ea"/><path d="M0 8.9 L27.2 8.9 L30.9 .6" fill="none" stroke="#333" stroke-width=".9"/><path d="M31.3 .6 L35.5 8.9 L63.5 8.9 L67.7 .6" fill="none" stroke="#333" stroke-width=".9"/><path d="M68.5 .6 L72.6 8.9 L102.4 8.9 L106.6 .6" fill="none" stroke="#333" stroke-width=".9"/></svg>
<span style="left:4.1px;top:432px;height:9px;line-height:9px;font-size:6.70px;font-weight:bold;transform-origin:0 50%;transform:scaleX(1.0488);color:#000;">Model</span>
<span style="left:39.3px;top:432px;height:9px;line-height:9px;font-size:6.70px;font-weight:bold;transform-origin:0 50%;transform:scaleX(0.9785);color:#222;">Sheet1</span>
<span style="left:77.6px;top:432px;height:9px;line-height:9px;font-size:6.70px;font-weight:bold;transform-origin:0 50%;transform:scaleX(0.9740);color:#222;">Sheet2</span>
<div style="left:111.4px;top:433.5px;width:10.6px;height:6.8px;background:#ececf2;border:1px solid #777;"></div>
<svg style="left:113.2px;top:433.9px" width="7" height="6" viewBox="0 0 7 6"><path d="M3.5 .8 L3.5 5.2 M1.3 3 L5.7 3" stroke="#222" stroke-width=".9"/></svg>
<div style="left:0.0px;top:443.0px;width:848.0px;height:56.0px;background:#ededf1;"></div>
<div style="left:87.0px;top:79.6px;width:106.3px;height:106.6px;background:linear-gradient(180deg,#e4e9f4 0%,#eceef6 40%,#e9ebf3 100%);border:1px solid #c2c6d2;border-right-color:#8a8d98;border-bottom-color:#9a9da8;box-shadow:1px 1px 2px rgba(0,0,0,.5);"></div>
<div style="left:89.3px;top:126.0px;width:101.8px;height:15.0px;background:#2085ee;"></div>
<span style="left:102.7px;top:84px;height:12px;line-height:12px;font-size:9.30px;transform-origin:0 50%;transform:scaleX(0.8429);color:#1a1a22;">Copy</span>
<span style="left:102.7px;top:98px;height:12px;line-height:12px;font-size:9.30px;transform-origin:0 50%;transform:scaleX(0.8794);color:#1a1a22;">Move</span>
<span style="left:102.7px;top:113px;height:12px;line-height:12px;font-size:9.30px;transform-origin:0 50%;transform:scaleX(0.8649);color:#1a1a22;">Rotate</span>
<span style="left:102.7px;top:127px;height:12px;line-height:12px;font-size:9.30px;transform-origin:0 50%;transform:scaleX(0.8650);color:#fff;">Mirror</span>
<span style="left:102.7px;top:142px;height:12px;line-height:12px;font-size:9.30px;transform-origin:0 50%;transform:scaleX(0.8339);color:#1a1a22;">Scale</span>
<span style="left:102.7px;top:157px;height:12px;line-height:12px;font-size:9.30px;transform-origin:0 50%;transform:scaleX(0.8383);color:#1a1a22;">Stretch</span>
<span style="left:102.7px;top:172px;height:12px;line-height:12px;font-size:9.30px;transform-origin:0 50%;transform:scaleX(0.8875);color:#1a1a22;">Quick Modify</span>
<svg style="left:90.4px;top:85.1px" width="8.6" height="8.6" viewBox="0 0 10 10"><path d="M2 8 L8 2" stroke="#333" stroke-width="1" stroke-dasharray="1.5 1"/><rect x=".5" y="6.8" width="2.6" height="2.6" fill="#2a6a2a"/><rect x="6.8" y=".6" width="2.6" height="2.6" fill="#223"/></svg>
<svg style="left:90.4px;top:99.4px" width="8.6" height="8.6" viewBox="0 0 10 10"><path d="M2 8 L8 2" stroke="#333" stroke-width="1" stroke-dasharray="1.5 1"/><rect x=".6" y="6.6" width="2.6" height="2.6" fill="none" stroke="#557" stroke-width=".8"/><rect x="6.8" y=".6" width="2.6" height="2.6" fill="#335"/></svg>
<svg style="left:90.4px;top:114.3px" width="8.6" height="8.6" viewBox="0 0 10 10"><path d="M1.5 3 A4 3 0 0 1 8 2.5" stroke="#555" stroke-width=".9" fill="none"/><rect x="1" y="4.5" width="3.4" height="4.5" fill="none" stroke="#777" stroke-width=".8" stroke-dasharray="1 .8"/><circle cx="7" cy="7" r="1.7" fill="none" stroke="#333" stroke-width=".9"/></svg>
<svg style="left:90.4px;top:128.9px" width="8.6" height="8.6" viewBox="0 0 10 10"><path d="M2.5 1 L2.5 9 L8 9Z" fill="none" stroke="#dfe8ff" stroke-width=".9"/></svg>
<svg style="left:90.4px;top:143.6px" width="8.6" height="8.6" viewBox="0 0 10 10"><rect x=".8" y=".8" width="8.4" height="8.4" fill="none" stroke="#555" stroke-width=".9"/><path d="M2.5 7.5 L7 3 M4.8 3 L7 3 L7 5.2" stroke="#555" stroke-width=".8" fill="none"/></svg>
<svg style="left:90.4px;top:158.3px" width="8.6" height="8.6" viewBox="0 0 10 10"><rect x=".8" y="1.5" width="3" height="7.5" fill="none" stroke="#444" stroke-width=".9"/><path d="M4.5 4 L9 4 M4.5 7 L9 7" stroke="#3a78c8" stroke-width="1"/></svg>
<svg style="left:90.4px;top:173.0px" width="8.6" height="8.6" viewBox="0 0 10 10"><rect x="1.5" y="1.5" width="3.5" height="7" fill="none" stroke="#666" stroke-width=".8" stroke-dasharray="1 .8"/><circle cx="7.3" cy="3" r="1.4" fill="none" stroke="#444" stroke-width=".8"/><circle cx="7.3" cy="7.3" r="1.4" fill="none" stroke="#444" stroke-width=".8"/></svg>
<svg style="left:119.5px;top:130.0px" width="9" height="13" viewBox="0 0 9 13"><path d="M1 .8 L1 10.6 L3.3 8.6 L5 12.2 L6.6 11.4 L4.9 8 L7.8 7.8Z" fill="#fff" stroke="#111" stroke-width=".9"/></svg>
</div>
<div id="wmp">
<div style="left:0.0px;top:23.7px;width:848.0px;height:44.0px;background:linear-gradient(180deg,rgba(0,0,0,1) 0%,rgba(0,0,0,1) 12%,rgba(0,0,0,.96) 20%,rgba(0,0,0,.91) 28%,rgba(0,0,0,.75) 40.5%,rgba(0,0,0,.45) 56%,rgba(0,0,0,.28) 68%,rgba(0,0,0,.14) 80%,rgba(0,0,0,.04) 92%,rgba(0,0,0,0) 100%);"></div>
<span style="left:7.6px;top:32px;height:17px;line-height:17px;font-size:13.70px;transform-origin:0 50%;transform:scaleX(1.0429);color:#fff;">Mirror</span>
<svg style="left:806.0px;top:26.0px" width="42" height="24" viewBox="0 0 42 24"><rect x="17" y="6.5" width="6" height="5.6" fill="#fff"/><rect x="24.6" y="6.5" width="5.8" height="5.6" fill="#fff"/><rect x="17" y="14" width="6" height="6" fill="#e4e4e4"/><path d="M24.3 17.6 L29 13.8 L29 16.2 L36.3 16.2 L36.3 19 L29 19 L29 21.4Z" fill="#fff"/><path d="M5.5 7.6 L9.5 7.6" stroke="#3a3a3a" stroke-width="1.2"/><path d="M35.5 4 L39.5 8 M39.5 4 L35.5 8" stroke="#333" stroke-width="1.1"/></svg>
<div style="left:0.0px;top:443.0px;width:848.0px;height:1.4px;background:#5c5c5e;"></div>
<div style="left:0.0px;top:444.4px;width:848.0px;height:4.0px;background:#8f8f91;"></div>
<div style="left:0.0px;top:448.0px;width:848.0px;height:1.0px;background:#a9a9ac;"></div>
<div style="left:0.0px;top:449.0px;width:848.0px;height:10.3px;background:linear-gradient(180deg,#96969b,#8b8b90);"></div>
<div style="left:0.0px;top:459.2px;width:848.0px;height:1.2px;background:#48484a;"></div>
<div style="left:0.0px;top:460.4px;width:848.0px;height:26.0px;background:linear-gradient(180deg,#c3c3c5 0%,#a2a2a4 35%,#77777a 75%,#5c5c5e 100%);"></div>
<div style="left:0.0px;top:486.2px;width:848.0px;height:1.2px;background:#222;"></div>
<div style="left:0.0px;top:487.4px;width:848.0px;height:11.6px;background:linear-gradient(180deg,#3c3c3c,#0a0a0a);"></div>
<div style="left:0.0px;top:460.4px;width:700.0px;height:26.0px;background:linear-gradient(90deg,rgba(0,0,0,.15) 0%,rgba(0,0,0,.13) 35%,rgba(0,0,0,0) 100%);"></div>
<div style="left:0.0px;top:446.3px;width:848.0px;height:1.1px;background:#707073;"></div>
<div style="left:6.0px;top:445.6px;width:146.5px;height:2.2px;background:linear-gradient(90deg,#1b63d8,#2e8df5 40%,#59b4ff 92%,#bfe4ff);box-shadow:0 0 1.5px #3a8cff;border-radius:1px;"></div>
<div style="left:5.0px;top:458.6px;width:6.0px;height:2.6px;background:#77777a;border-radius:1px;"></div>
<span style="left:0.3px;top:447px;height:11px;line-height:11px;font-size:7.80px;font-weight:bold;transform-origin:0 50%;transform:scaleX(0.8913);color:#0a0a0a;">Command Window</span>
<span style="left:0.8px;top:461px;height:13px;line-height:13px;font-size:9.60px;transform-origin:0 50%;transform:scaleX(0.9338);color:#0c0c0c;">Active settings: Copy on active layer = Off</span>
<span style="left:0.8px;top:471px;height:13px;line-height:13px;font-size:9.40px;font-weight:bold;transform-origin:0 50%;transform:scaleX(0.9368);color:#0a0a0a;">Specify entities»</span>
<span style="left:73.0px;top:472px;height:13px;line-height:13px;font-size:9.60px;transform-origin:0 50%;transform:scaleX(0.8875);color:#0c0c0c;">«Cancel»</span>
<div style="left:0.0px;top:490.0px;width:3.0px;height:1.5px;background:#111;"></div>
<div style="left:0.0px;top:493.0px;width:3.0px;height:1.5px;background:#111;"></div>
<svg style="left:824.0px;top:447.0px" width="24" height="9" viewBox="0 0 24 9"><rect x="3.5" y="1" width="4" height="3.4" fill="none" stroke="#111" stroke-width="1"/><rect x="1.8" y="3.2" width="4" height="3.6" fill="#8f8f94" stroke="#111" stroke-width="1"/><path d="M17 1.5 L22 7 M22 1.5 L17 7" stroke="#111" stroke-width="1.6"/></svg>
<span style="left:190.0px;top:469px;height:16px;line-height:16px;font-size:12.60px;transform-origin:0 50%;transform:scaleX(0.9895);color:#fff;">00:01</span>
<div style="left:231.3px;top:461.0px;width:384.0px;height:29.5px;border-radius:14.7px;background:linear-gradient(180deg,rgba(225,225,232,.6) 0%,rgba(185,185,192,.5) 45%,rgba(150,150,156,.5) 87%,rgba(75,75,80,.65) 90%,rgba(62,62,66,.65) 100%);border:1px solid;border-color:rgba(120,122,180,.9) rgba(150,152,195,.7) rgba(130,130,160,.45) rgba(130,132,190,.8);"></div>
<svg style="left:257.5px;top:466.5px" width="18" height="17" viewBox="0 0 18 17"><path d="M4.2 4 C4.2 10 8.5 13.6 14.5 13.6" stroke="#f2f2f2" stroke-width="1.9" fill="none"/><path d="M13.3 4 C13.3 9 9.5 13 4 14.2" stroke="#f2f2f2" stroke-width="1.9" fill="none"/><path d="M.8 6.4 L4.2 1 L7.6 6.4Z" fill="#f2f2f2"/><path d="M9.9 6.4 L13.3 1 L16.7 6.4Z" fill="#f2f2f2"/></svg>
<svg style="left:289.5px;top:467.0px" width="16" height="16" viewBox="0 0 16 16"><path d="M10.6 2.7 A6 6 0 1 1 4.6 3.2" stroke="#f2f2f2" stroke-width="2" fill="none"/><path d="M1.6 .6 L7.4 1 L4.4 6Z" fill="#f2f2f2"/></svg>
<div style="left:317.2px;top:466.3px;width:1.0px;height:19.2px;background:rgba(95,95,150,.7);"></div>
<div style="left:318.2px;top:466.3px;width:1.0px;height:19.2px;background:rgba(255,255,255,.18);"></div>
<div style="left:331.7px;top:469.7px;width:12.2px;height:11.8px;background:linear-gradient(180deg,#fdfdfd,#e2e2e4);box-shadow:0 1px 1px rgba(0,0,0,.4);"></div>
<div style="left:357.5px;top:464.8px;width:131.0px;height:21.0px;border-radius:7px;background:linear-gradient(180deg,rgba(215,215,218,.45),rgba(130,130,134,.3));border:1px solid;border-color:rgba(190,192,215,.85) rgba(190,192,215,.7) rgba(150,150,170,.5) rgba(190,192,215,.7);"></div>
<svg style="left:371.0px;top:469.0px" width="22" height="12" viewBox="0 0 22 12"><path d="M10.5 .5 L10.5 11.5 L1 6Z M20.5 .5 L20.5 11.5 L11 6Z" fill="#f4f4f4"/></svg>
<svg style="left:454.0px;top:469.0px" width="22" height="12" viewBox="0 0 22 12"><path d="M.8 .5 L.8 11.5 L10.3 6Z M10.8 .5 L10.8 11.5 L20.3 6Z" fill="#f4f4f4"/></svg>
<div style="left:402.5px;top:455.0px;width:41.3px;height:41.0px;border:1px dotted #e8e8e8;"></div>
<div style="left:402.8px;top:455.2px;width:40.4px;height:40.4px;border-radius:50%;background:linear-gradient(180deg,#9aa2b4,#5a6070);box-shadow:0 0 1.5px rgba(0,0,20,.8);"></div>
<div style="left:404.2px;top:456.6px;width:37.6px;height:37.6px;border-radius:50%;background:linear-gradient(180deg,#6ea2e8 0%,#4a86dc 22%,#3068c8 47%,#0a2c92 52%,#0e3cb0 70%,#1f6ae6 88%,#3d9cff 100%);box-shadow:inset 0 0 3px 1px rgba(4,20,90,.75);"></div>
<div style="left:409.0px;top:484.0px;width:28.0px;height:10.0px;border-radius:50%;background:radial-gradient(ellipse at 50% 100%,rgba(110,210,255,.8),rgba(90,200,255,0) 70%);"></div>
<svg style="left:416.7px;top:465.4px" width="18" height="20" viewBox="0 0 18 20"><defs><linearGradient id="pg" x1="0" y1="0" x2="1" y2="1"><stop offset="0" stop-color="#fff"/><stop offset="1" stop-color="#cfd8ea"/></linearGradient></defs><path d="M1 1 L1 19 L16.6 10Z" fill="url(#pg)"/></svg>
<svg style="left:499.0px;top:467.5px" width="20" height="15" viewBox="0 0 20 15"><path d="M1 5 L4.5 5 L9 1 L9 14 L4.5 10 L1 10Z" fill="#f4f4f4"/><path d="M11 4.5 A3.5 3.5 0 0 1 11 10.5" stroke="#f4f4f4" stroke-width="1.3" fill="none"/><path d="M13 2.5 A6 6 0 0 1 13 12.5" stroke="#f4f4f4" stroke-width="1.3" fill="none"/><path d="M15.2 .8 A8.5 8.5 0 0 1 15.2 14.2" stroke="#f4f4f4" stroke-width="1.2" fill="none"/></svg>
<div style="left:532.5px;top:474.4px;width:60.0px;height:1.5px;background:#1f62dc;box-shadow:0 0 1px #1a4ab0;"></div>
<div style="left:588.0px;top:469.3px;width:11.6px;height:11.6px;border-radius:50%;background:radial-gradient(circle at 50% 25%,#b8dcff 0%,#3f8bea 40%,#0f3f9a 100%);border:1px solid #1a3a80;"></div>
<div style="left:815.8px;top:469.0px;width:15.6px;height:14.0px;border:1.4px solid #f2f2f2;background:rgba(255,255,255,.1);"></div>
<svg style="left:817.0px;top:470.0px" width="13" height="12" viewBox="0 0 13 12"><path d="M3 9.5 L9 3.5" stroke="#f2f2f2" stroke-width="1.8"/><path d="M5 2.5 L10.3 2.5 L10.3 7.8Z" fill="#f2f2f2"/></svg>
<svg style="left:836.0px;top:462.0px" width="9" height="7" viewBox="0 0 9 7"><path d="M.8 5.5 L4.5 1.2 L8.2 5.5Z" fill="#111"/></svg>
<svg style="left:836.0px;top:478.0px" width="9" height="7" viewBox="0 0 9 7"><path d="M.8 1.2 L4.5 5.5 L8.2 1.2Z" fill="#111"/></svg>
</div>
</div>
</body></html>
